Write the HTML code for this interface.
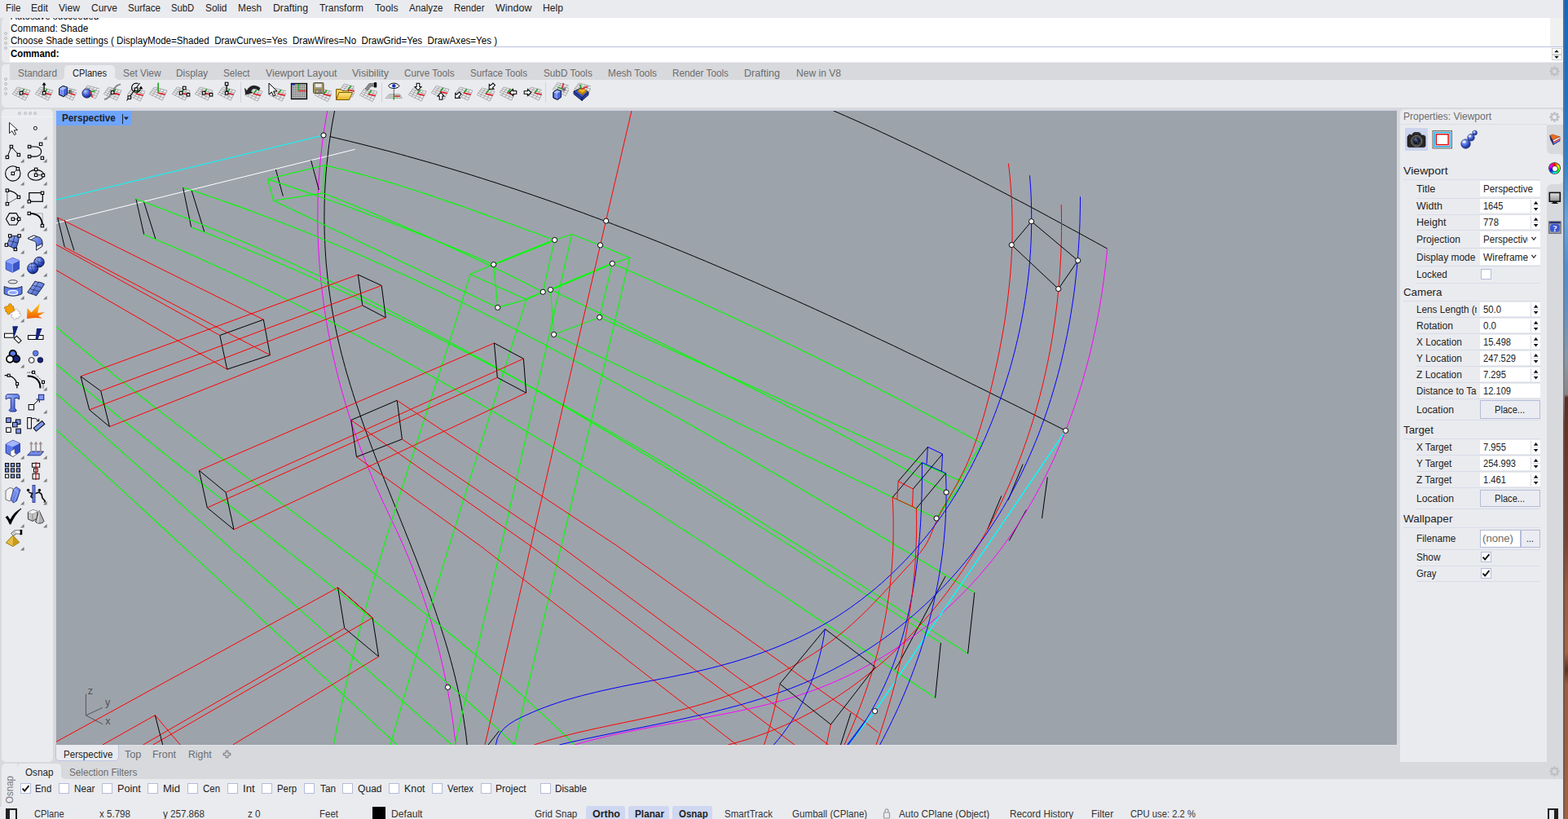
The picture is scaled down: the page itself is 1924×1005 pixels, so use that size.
<!DOCTYPE html>
<html><head><meta charset="utf-8"><title>Rhino</title>
<style>
html,body{margin:0;padding:0;}
body{width:1924px;height:1005px;position:relative;overflow:hidden;background:#EAEBEF;font-family:"Liberation Sans",sans-serif;}
.a{position:absolute;}
.t{position:absolute;white-space:pre;line-height:1;transform-origin:0 0;display:inline-block;}
.cb{position:absolute;width:12px;height:12px;background:#fff;border:1px solid #b9bfd6;box-sizing:content-box;}
.box{position:absolute;background:#fff;}
.sep{position:absolute;height:1px;background:#d3d8e6;}
</style></head><body>
<div class="a" style="left:0px;top:0px;width:1919px;height:1005px;background:#D8D9DD;"></div>
<div class="a" style="left:1918px;top:0px;width:6px;height:1005px;background:linear-gradient(to bottom,#1467bd 0px,#1e74c4 120px,#2f83cc 200px,#6aa6d8 270px,#4d8fcf 330px,#5f93c4 380px,#8a9aa8 440px,#8c8682 484px,#5a2c25 488px,#6b372e 560px,#7a4233 660px,#9a5a3e 720px,#a86645 800px,#5e3324 822px,#9c5c3f 840px,#a3633f 1005px);"></div>
<div class="a" style="left:1918px;top:0px;width:1.5px;height:1005px;background:linear-gradient(to bottom,#3f6ea5 0px,#5b7fae 300px,#7d7f86 480px,#6a4a42 520px,#7a5a4e 1005px);"></div>
<div class="a" style="left:0px;top:0px;width:1918px;height:22px;background:#EAEBEF;"></div>
<div class="a" style="left:2px;top:22px;width:1916px;height:54.5px;background:#EAEBEF;border-radius:5px 0 0 5px;"></div>
<div class="a" style="left:12px;top:22px;width:1890px;height:35px;background:#fff;"></div>
<div class="a" style="left:1902px;top:22px;width:16px;height:35px;background:#F0F0F0;"></div>
<div class="a" style="left:12px;top:57px;width:1906px;height:1px;background:#B9C2DF;"></div>
<div class="a" style="left:12px;top:58px;width:1906px;height:18px;background:#fff;"></div>
<div class="a" style="left:1903.5px;top:59px;width:13px;height:7.7px;background:#fff;border:1px solid #d0d0d0;box-sizing:border-box;"></div>
<div class="a" style="left:1903.5px;top:66.7px;width:13px;height:7.8px;background:#fff;border:1px solid #d0d0d0;box-sizing:border-box;"></div>
<svg class="a" style="left:1903px;top:58px" width="14" height="17"><path d="M4.2 6.3L7 3.2L9.8 6.3Z M4.2 10.8L7 13.9L9.8 10.8Z" fill="#111"/></svg>
<div class="a" style="left:4.9px;top:39.0px;width:2px;height:2px;border:1px solid #b8b9bf;border-radius:50%;"></div>
<div class="a" style="left:4.9px;top:45.0px;width:2px;height:2px;border:1px solid #b8b9bf;border-radius:50%;"></div>
<div class="a" style="left:4.9px;top:51.0px;width:2px;height:2px;border:1px solid #b8b9bf;border-radius:50%;"></div>
<div class="a" style="left:4.9px;top:57.0px;width:2px;height:2px;border:1px solid #b8b9bf;border-radius:50%;"></div>
<div class="a" style="left:2px;top:79px;width:1916px;height:52.7px;background:#EAEBEF;border-radius:5px 0 0 5px;"></div>
<div class="a" style="left:11.5px;top:79px;width:1906.5px;height:18.5px;background:#D8D9DD;"></div>
<div class="a" style="left:79.2px;top:79.5px;width:61.6px;height:18.5px;background:#EAEBEF;border-radius:5px 5px 0 0;"></div>
<svg class="a" style="left:74.2px;top:92.5px" width="5" height="5"><path d="M5 0 A5 5 0 0 1 0 5 L5 5Z" fill="#EAEBEF"/></svg>
<svg class="a" style="left:140px;top:92.5px" width="6" height="5"><path d="M0 0H1 A5 5 0 0 0 6 5 L0 5Z" fill="#EAEBEF"/></svg>
<div class="a" style="left:4.9px;top:95.0px;width:2px;height:2px;border:1px solid #b8b9bf;border-radius:50%;"></div>
<div class="a" style="left:4.9px;top:101.0px;width:2px;height:2px;border:1px solid #b8b9bf;border-radius:50%;"></div>
<div class="a" style="left:4.9px;top:107.0px;width:2px;height:2px;border:1px solid #b8b9bf;border-radius:50%;"></div>
<div class="a" style="left:4.9px;top:113.0px;width:2px;height:2px;border:1px solid #b8b9bf;border-radius:50%;"></div>
<div class="a" style="left:294.7px;top:101px;width:1.2px;height:25px;background:#cfd2de;"></div>
<div class="a" style="left:467.8px;top:101px;width:1.2px;height:25px;background:#cfd2de;"></div>
<div class="a" style="left:668.5px;top:101px;width:1.2px;height:25px;background:#cfd2de;"></div>
<div class="a" style="left:2px;top:134.3px;width:63px;height:800.7px;background:#EAEBEF;border-radius:5px;"></div>
<div class="a" style="left:22.2px;top:136.9px;width:2px;height:2px;border:1px solid #b8b9bf;border-radius:50%;"></div>
<div class="a" style="left:28.5px;top:136.9px;width:2px;height:2px;border:1px solid #b8b9bf;border-radius:50%;"></div>
<div class="a" style="left:34.8px;top:136.9px;width:2px;height:2px;border:1px solid #b8b9bf;border-radius:50%;"></div>
<div class="a" style="left:41.2px;top:136.9px;width:2px;height:2px;border:1px solid #b8b9bf;border-radius:50%;"></div>
<div class="a" style="left:2px;top:143.3px;width:63px;height:0.7px;background:#f2f3f6;"></div>
<div class="a" style="left:69px;top:136px;width:1645px;height:778px;background:#9DA3AB;"></div>
<div class="a" style="left:68.2px;top:135.2px;width:1645.8px;height:0.8px;background:#cdd2e4;"></div>
<div class="a" style="left:68.2px;top:135.2px;width:0.8px;height:778.8px;background:#cdd2e4;"></div>
<div class="a" style="left:69px;top:136px;width:91.5px;height:18px;background:#6EA5FF;border-radius:0 0 3px 0;"></div>
<div class="a" style="left:149.5px;top:139.5px;width:1.2px;height:12px;background:#20242e;"></div>
<svg class="a" style="left:151px;top:142px" width="8" height="6"><path d="M0.8 1.5L7 1.5L3.9 5.3Z" fill="#20242e"/></svg>
<div class="a" style="left:69px;top:914px;width:1645px;height:1px;background:#e0e2ea;"></div>
<div class="a" style="left:68.2px;top:914px;width:78px;height:20.3px;background:#EAEBEF;border-radius:0 0 5px 5px;border:1px solid #bcc5e0;border-top:none;box-sizing:border-box;"></div>
<svg class="a" style="left:273px;top:920px" width="11" height="11"><path d="M4.2 1.2h2.6v3h3v2.6h-3v3h-2.6v-3h-3v-2.6h3z" fill="none" stroke="#666" stroke-width="0.9"/></svg>
<div class="a" style="left:1718px;top:134px;width:200px;height:801px;background:#EAEBEF;border-radius:5px 5px 0 0;"></div>
<div class="a" style="left:1718px;top:152px;width:180px;height:1px;background:#dddfe6;"></div>
<div class="a" style="left:1898px;top:152.5px;width:20px;height:36px;background:#D8D9DD;border-radius:0 0 0 6px;"></div>
<div class="a" style="left:1898px;top:225.5px;width:20px;height:709.5px;background:#D8D9DD;border-radius:6px 0 0 0;"></div>
<svg class="a" style="left:1913px;top:188.5px" width="5" height="37"><path d="M5 0H0A5 5 0 0 1 5 5Z M5 37H0A5 5 0 0 0 5 32Z" fill="#D8D9DD"/></svg>
<div class="a" style="left:1724px;top:157px;width:28px;height:28px;background:#CDD5EE;"></div>
<div class="a" style="left:1722px;top:220px;width:168px;height:1px;background:#d9dce8;"></div>
<div class="a" style="left:1738px;top:243px;width:152px;height:1px;background:#d9dce8;"></div>
<div class="a" style="left:1738px;top:263px;width:152px;height:1px;background:#d9dce8;"></div>
<div class="a" style="left:1738px;top:282px;width:152px;height:1px;background:#d9dce8;"></div>
<div class="a" style="left:1738px;top:304px;width:152px;height:1px;background:#d9dce8;"></div>
<div class="a" style="left:1738px;top:326px;width:152px;height:1px;background:#d9dce8;"></div>
<div class="a" style="left:1738px;top:347px;width:152px;height:1px;background:#d9dce8;"></div>
<div class="a" style="left:1722px;top:369px;width:168px;height:1px;background:#d9dce8;"></div>
<div class="a" style="left:1738px;top:389px;width:152px;height:1px;background:#d9dce8;"></div>
<div class="a" style="left:1738px;top:409px;width:152px;height:1px;background:#d9dce8;"></div>
<div class="a" style="left:1738px;top:429px;width:152px;height:1px;background:#d9dce8;"></div>
<div class="a" style="left:1738px;top:449px;width:152px;height:1px;background:#d9dce8;"></div>
<div class="a" style="left:1738px;top:469px;width:152px;height:1px;background:#d9dce8;"></div>
<div class="a" style="left:1738px;top:489px;width:152px;height:1px;background:#d9dce8;"></div>
<div class="a" style="left:1738px;top:515px;width:152px;height:1px;background:#d9dce8;"></div>
<div class="a" style="left:1722px;top:538px;width:168px;height:1px;background:#d9dce8;"></div>
<div class="a" style="left:1738px;top:558px;width:152px;height:1px;background:#d9dce8;"></div>
<div class="a" style="left:1738px;top:578px;width:152px;height:1px;background:#d9dce8;"></div>
<div class="a" style="left:1738px;top:598px;width:152px;height:1px;background:#d9dce8;"></div>
<div class="a" style="left:1738px;top:624px;width:152px;height:1px;background:#d9dce8;"></div>
<div class="a" style="left:1722px;top:647px;width:168px;height:1px;background:#d9dce8;"></div>
<div class="a" style="left:1738px;top:674px;width:152px;height:1px;background:#d9dce8;"></div>
<div class="a" style="left:1738px;top:694px;width:152px;height:1px;background:#d9dce8;"></div>
<div class="a" style="left:1738px;top:713px;width:152px;height:1px;background:#d9dce8;"></div>
<div class="a" style="left:1816px;top:222px;width:74px;height:19px;background:#fff;"></div>
<div class="a" style="left:1816px;top:244px;width:74px;height:17px;background:#fff;"></div>
<div class="a" style="left:1816px;top:264px;width:74px;height:17px;background:#fff;"></div>
<div class="a" style="left:1816px;top:284px;width:74px;height:19px;background:#fff;"></div>
<div class="a" style="left:1816px;top:306px;width:74px;height:19px;background:#fff;"></div>
<div class="a" style="left:1816px;top:371px;width:74px;height:17px;background:#fff;"></div>
<div class="a" style="left:1816px;top:391px;width:74px;height:17px;background:#fff;"></div>
<div class="a" style="left:1816px;top:411px;width:74px;height:17px;background:#fff;"></div>
<div class="a" style="left:1816px;top:431px;width:74px;height:17px;background:#fff;"></div>
<div class="a" style="left:1816px;top:451px;width:74px;height:17px;background:#fff;"></div>
<div class="a" style="left:1816px;top:471px;width:74px;height:17px;background:#fff;"></div>
<div class="a" style="left:1816px;top:540px;width:74px;height:17px;background:#fff;"></div>
<div class="a" style="left:1816px;top:560px;width:74px;height:17px;background:#fff;"></div>
<div class="a" style="left:1816px;top:580px;width:74px;height:17px;background:#fff;"></div>
<div class="a" style="left:1878.3px;top:244.5px;width:1px;height:16px;background:#d8dbe6;"></div>
<div class="a" style="left:1879.3px;top:252.2px;width:10.7px;height:0.8px;background:#e1e4ee;"></div>
<svg class="a" style="left:1880px;top:244px" width="10" height="17"><path d="M1.8 6.8L4.6 2.9L7.4 6.8Z M1.8 10.9L4.6 14.5L7.4 10.9Z" fill="#111"/></svg>
<div class="a" style="left:1878.3px;top:264.5px;width:1px;height:16px;background:#d8dbe6;"></div>
<div class="a" style="left:1879.3px;top:272.2px;width:10.7px;height:0.8px;background:#e1e4ee;"></div>
<svg class="a" style="left:1880px;top:264px" width="10" height="17"><path d="M1.8 6.8L4.6 2.9L7.4 6.8Z M1.8 10.9L4.6 14.5L7.4 10.9Z" fill="#111"/></svg>
<div class="a" style="left:1878.3px;top:371.5px;width:1px;height:16px;background:#d8dbe6;"></div>
<div class="a" style="left:1879.3px;top:379.2px;width:10.7px;height:0.8px;background:#e1e4ee;"></div>
<svg class="a" style="left:1880px;top:371px" width="10" height="17"><path d="M1.8 6.8L4.6 2.9L7.4 6.8Z M1.8 10.9L4.6 14.5L7.4 10.9Z" fill="#111"/></svg>
<div class="a" style="left:1878.3px;top:391.5px;width:1px;height:16px;background:#d8dbe6;"></div>
<div class="a" style="left:1879.3px;top:399.2px;width:10.7px;height:0.8px;background:#e1e4ee;"></div>
<svg class="a" style="left:1880px;top:391px" width="10" height="17"><path d="M1.8 6.8L4.6 2.9L7.4 6.8Z M1.8 10.9L4.6 14.5L7.4 10.9Z" fill="#111"/></svg>
<div class="a" style="left:1878.3px;top:411.5px;width:1px;height:16px;background:#d8dbe6;"></div>
<div class="a" style="left:1879.3px;top:419.2px;width:10.7px;height:0.8px;background:#e1e4ee;"></div>
<svg class="a" style="left:1880px;top:411px" width="10" height="17"><path d="M1.8 6.8L4.6 2.9L7.4 6.8Z M1.8 10.9L4.6 14.5L7.4 10.9Z" fill="#111"/></svg>
<div class="a" style="left:1878.3px;top:431.5px;width:1px;height:16px;background:#d8dbe6;"></div>
<div class="a" style="left:1879.3px;top:439.2px;width:10.7px;height:0.8px;background:#e1e4ee;"></div>
<svg class="a" style="left:1880px;top:431px" width="10" height="17"><path d="M1.8 6.8L4.6 2.9L7.4 6.8Z M1.8 10.9L4.6 14.5L7.4 10.9Z" fill="#111"/></svg>
<div class="a" style="left:1878.3px;top:451.5px;width:1px;height:16px;background:#d8dbe6;"></div>
<div class="a" style="left:1879.3px;top:459.2px;width:10.7px;height:0.8px;background:#e1e4ee;"></div>
<svg class="a" style="left:1880px;top:451px" width="10" height="17"><path d="M1.8 6.8L4.6 2.9L7.4 6.8Z M1.8 10.9L4.6 14.5L7.4 10.9Z" fill="#111"/></svg>
<div class="a" style="left:1878.3px;top:540.5px;width:1px;height:16px;background:#d8dbe6;"></div>
<div class="a" style="left:1879.3px;top:548.2px;width:10.7px;height:0.8px;background:#e1e4ee;"></div>
<svg class="a" style="left:1880px;top:540px" width="10" height="17"><path d="M1.8 6.8L4.6 2.9L7.4 6.8Z M1.8 10.9L4.6 14.5L7.4 10.9Z" fill="#111"/></svg>
<div class="a" style="left:1878.3px;top:560.5px;width:1px;height:16px;background:#d8dbe6;"></div>
<div class="a" style="left:1879.3px;top:568.2px;width:10.7px;height:0.8px;background:#e1e4ee;"></div>
<svg class="a" style="left:1880px;top:560px" width="10" height="17"><path d="M1.8 6.8L4.6 2.9L7.4 6.8Z M1.8 10.9L4.6 14.5L7.4 10.9Z" fill="#111"/></svg>
<div class="a" style="left:1878.3px;top:580.5px;width:1px;height:16px;background:#d8dbe6;"></div>
<div class="a" style="left:1879.3px;top:588.2px;width:10.7px;height:0.8px;background:#e1e4ee;"></div>
<svg class="a" style="left:1880px;top:580px" width="10" height="17"><path d="M1.8 6.8L4.6 2.9L7.4 6.8Z M1.8 10.9L4.6 14.5L7.4 10.9Z" fill="#111"/></svg>
<svg class="a" style="left:1878px;top:289px" width="10" height="8"><path d="M1.4 1.9L4 5.3L6.6 1.9" fill="none" stroke="#222" stroke-width="1.2"/></svg>
<svg class="a" style="left:1878px;top:311px" width="10" height="8"><path d="M1.4 1.9L4 5.3L6.6 1.9" fill="none" stroke="#222" stroke-width="1.2"/></svg>
<div class="a" style="left:1817.3px;top:330px;width:13px;height:13px;background:#fff;border:1px solid #b4bcd8;box-sizing:border-box;"></div>
<div class="a" style="left:1817.3px;top:677.3px;width:13px;height:13px;background:#fff;border:1px solid #b4bcd8;box-sizing:border-box;"></div>
<svg class="a" style="left:1817.3px;top:677.3px" width="13" height="13"><path d="M2.6 6.6L5.2 9.6L10.4 3.2" fill="none" stroke="#111" stroke-width="1.9"/></svg>
<div class="a" style="left:1817.3px;top:697px;width:13px;height:13px;background:#fff;border:1px solid #b4bcd8;box-sizing:border-box;"></div>
<svg class="a" style="left:1817.3px;top:697px" width="13" height="13"><path d="M2.6 6.6L5.2 9.6L10.4 3.2" fill="none" stroke="#111" stroke-width="1.9"/></svg>
<div class="a" style="left:1816px;top:491px;width:74px;height:23px;background:#EBECF2;border:1px solid #b4bcd8;box-sizing:border-box;"></div>
<div class="a" style="left:1816px;top:601px;width:74px;height:21px;background:#EBECF2;border:1px solid #b4bcd8;box-sizing:border-box;"></div>
<div class="a" style="left:1816px;top:650px;width:49.5px;height:21.5px;background:#fff;border:1px solid #b4bcd8;box-sizing:border-box;"></div>
<div class="a" style="left:1866px;top:650px;width:24px;height:21.5px;background:#EBECF2;border:1px solid #b4bcd8;box-sizing:border-box;"></div>
<div class="a" style="left:2px;top:956px;width:1916px;height:49px;background:#EAEBEF;"></div>
<div class="a" style="left:2px;top:937px;width:19px;height:53px;background:#EAEBEF;border-radius:5px 0 0 5px;"></div>
<div class="a" style="left:21px;top:937px;width:54px;height:20px;background:#EAEBEF;border-radius:5px 5px 0 0;"></div>
<svg class="a" style="left:75px;top:951px" width="5" height="5"><path d="M0 0 A5 5 0 0 0 5 5 L0 5Z" fill="#EAEBEF"/></svg>
<div class="a" style="left:24.5px;top:961px;width:13px;height:13px;background:#fff;border:1px solid #b4bcd8;box-sizing:border-box;"></div>
<svg class="a" style="left:24.5px;top:961px" width="13" height="13"><path d="M2.6 6.6L5.2 9.6L10.4 3.2" fill="none" stroke="#111" stroke-width="1.9"/></svg>
<div class="a" style="left:72px;top:961px;width:13px;height:13px;background:#fff;border:1px solid #b4bcd8;box-sizing:border-box;"></div>
<div class="a" style="left:125px;top:961px;width:13px;height:13px;background:#fff;border:1px solid #b4bcd8;box-sizing:border-box;"></div>
<div class="a" style="left:181.3px;top:961px;width:13px;height:13px;background:#fff;border:1px solid #b4bcd8;box-sizing:border-box;"></div>
<div class="a" style="left:230.4px;top:961px;width:13px;height:13px;background:#fff;border:1px solid #b4bcd8;box-sizing:border-box;"></div>
<div class="a" style="left:279.2px;top:961px;width:13px;height:13px;background:#fff;border:1px solid #b4bcd8;box-sizing:border-box;"></div>
<div class="a" style="left:321.3px;top:961px;width:13px;height:13px;background:#fff;border:1px solid #b4bcd8;box-sizing:border-box;"></div>
<div class="a" style="left:373.3px;top:961px;width:13px;height:13px;background:#fff;border:1px solid #b4bcd8;box-sizing:border-box;"></div>
<div class="a" style="left:420.4px;top:961px;width:13px;height:13px;background:#fff;border:1px solid #b4bcd8;box-sizing:border-box;"></div>
<div class="a" style="left:477.4px;top:961px;width:13px;height:13px;background:#fff;border:1px solid #b4bcd8;box-sizing:border-box;"></div>
<div class="a" style="left:530.4px;top:961px;width:13px;height:13px;background:#fff;border:1px solid #b4bcd8;box-sizing:border-box;"></div>
<div class="a" style="left:590px;top:961px;width:13px;height:13px;background:#fff;border:1px solid #b4bcd8;box-sizing:border-box;"></div>
<div class="a" style="left:662.6px;top:961px;width:13px;height:13px;background:#fff;border:1px solid #b4bcd8;box-sizing:border-box;"></div>
<div class="a" style="left:0px;top:990px;width:1918px;height:15px;background:#EAEBEF;"></div>
<div class="a" style="left:719px;top:989px;width:48px;height:16px;background:#CFD7F1;border-radius:3px 3px 0 0;"></div>
<div class="a" style="left:771px;top:989px;width:50px;height:16px;background:#CFD7F1;border-radius:3px 3px 0 0;"></div>
<div class="a" style="left:824.5px;top:989px;width:49.5px;height:16px;background:#CFD7F1;border-radius:3px 3px 0 0;"></div>
<div class="a" style="left:457px;top:990px;width:15.8px;height:15px;background:#000;"></div>
<div class="a" style="left:7.3px;top:992px;width:13.5px;height:13px;background:none;border:2px solid #222;border-bottom:none;box-sizing:border-box;"></div>
<div class="a" style="left:7.3px;top:992px;width:4.7px;height:13px;background:#222;"></div>
<div class="a" style="left:1899px;top:991.7px;width:13px;height:13.3px;background:none;border:2px solid #222;border-bottom:none;box-sizing:border-box;"></div>
<div class="a" style="left:1907px;top:991.7px;width:5px;height:13.3px;background:#222;"></div>
<svg class="a" style="left:1083px;top:991px" width="10" height="14"><rect x="1.5" y="6" width="7" height="7" rx="1" fill="none" stroke="#999" stroke-width="1.2"/><path d="M3 6V3.8a2 2 0 0 1 4 0V6" fill="none" stroke="#999" stroke-width="1.2"/></svg>
<svg class="a" style="left:1901.3px;top:81.4px" width="13" height="13" viewBox="-6.5 -6.5 13 13"><g fill="#bfc0c6"><rect x="-1.3" y="-6.2" width="2.6" height="3.2" transform="rotate(0)"/><rect x="-1.3" y="-6.2" width="2.6" height="3.2" transform="rotate(45)"/><rect x="-1.3" y="-6.2" width="2.6" height="3.2" transform="rotate(90)"/><rect x="-1.3" y="-6.2" width="2.6" height="3.2" transform="rotate(135)"/><rect x="-1.3" y="-6.2" width="2.6" height="3.2" transform="rotate(180)"/><rect x="-1.3" y="-6.2" width="2.6" height="3.2" transform="rotate(225)"/><rect x="-1.3" y="-6.2" width="2.6" height="3.2" transform="rotate(270)"/><rect x="-1.3" y="-6.2" width="2.6" height="3.2" transform="rotate(315)"/></g><circle r="3.6" fill="none" stroke="#bfc0c6" stroke-width="2"/></svg>
<svg class="a" style="left:1901.3px;top:136.5px" width="13" height="13" viewBox="-6.5 -6.5 13 13"><g fill="#bfc0c6"><rect x="-1.3" y="-6.2" width="2.6" height="3.2" transform="rotate(0)"/><rect x="-1.3" y="-6.2" width="2.6" height="3.2" transform="rotate(45)"/><rect x="-1.3" y="-6.2" width="2.6" height="3.2" transform="rotate(90)"/><rect x="-1.3" y="-6.2" width="2.6" height="3.2" transform="rotate(135)"/><rect x="-1.3" y="-6.2" width="2.6" height="3.2" transform="rotate(180)"/><rect x="-1.3" y="-6.2" width="2.6" height="3.2" transform="rotate(225)"/><rect x="-1.3" y="-6.2" width="2.6" height="3.2" transform="rotate(270)"/><rect x="-1.3" y="-6.2" width="2.6" height="3.2" transform="rotate(315)"/></g><circle r="3.6" fill="none" stroke="#bfc0c6" stroke-width="2"/></svg>
<svg class="a" style="left:1901.3px;top:939.5px" width="13" height="13" viewBox="-6.5 -6.5 13 13"><g fill="#bfc0c6"><rect x="-1.3" y="-6.2" width="2.6" height="3.2" transform="rotate(0)"/><rect x="-1.3" y="-6.2" width="2.6" height="3.2" transform="rotate(45)"/><rect x="-1.3" y="-6.2" width="2.6" height="3.2" transform="rotate(90)"/><rect x="-1.3" y="-6.2" width="2.6" height="3.2" transform="rotate(135)"/><rect x="-1.3" y="-6.2" width="2.6" height="3.2" transform="rotate(180)"/><rect x="-1.3" y="-6.2" width="2.6" height="3.2" transform="rotate(225)"/><rect x="-1.3" y="-6.2" width="2.6" height="3.2" transform="rotate(270)"/><rect x="-1.3" y="-6.2" width="2.6" height="3.2" transform="rotate(315)"/></g><circle r="3.6" fill="none" stroke="#bfc0c6" stroke-width="2"/></svg>
<span class="t" style="left:5.5px;top:986px;font-size:12px;color:#7a7a7a;transform:rotate(-90deg) scaleX(0.96);transform-origin:0 0;">Osnap</span>
<svg class="a" style="left:69px;top:136px" width="1645" height="778" viewBox="0 0 1645 778" fill="none" stroke-linecap="butt">
<path d="M0.0 109.3 L328.0 30.0" stroke="#00ffff" stroke-width="1"/>
<path d="M0.0 137.8 L366.5 47.3" stroke="#ffffff" stroke-width="1"/>
<path d="M332.7 -0.0 L331.3 8.0 L329.9 16.1 L328.6 24.1 L327.5 32.2 L326.4 40.2 L325.5 48.3 L324.6 56.4 L323.8 64.5 L323.1 72.6 L322.5 80.7 L322.0 88.8 L321.6 96.9 L321.2 105.1 L321.0 113.2 L320.9 121.3 L320.8 129.4 L320.8 137.6 L320.9 145.7 L321.2 153.8 L321.4 161.9 L321.8 170.0 L322.3 178.1 L322.8 186.3 L323.5 194.4 L324.2 202.5 L325.0 210.5 L325.9 218.6 L326.9 226.7 L327.9 234.8 L329.1 242.8 L330.3 250.9 L331.6 258.9 L333.0 266.9 L334.5 274.9 L336.0 282.9 L337.6 290.9 L339.3 298.9 L341.1 306.8 L343.0 314.8 L344.9 322.7 L346.9 330.6 L349.0 338.4 L351.2 346.3 L353.4 354.1 L355.7 362.0 L358.1 369.7 L360.6 377.5 L363.1 385.2 L365.8 393.0 L368.4 400.6 L371.2 408.3 L374.0 415.9 L376.9 423.5 L379.9 431.1 L383.0 438.6 L386.1 446.1 L389.2 453.6 L392.5 461.0 L395.8 468.4 L399.1 475.8 L402.5 483.1 L406.0 490.4 L409.4 497.7 L412.9 505.0 L416.4 512.3 L419.8 519.6 L423.1 527.0 L426.4 534.4 L429.6 541.8 L432.7 549.3 L435.7 556.8 L438.7 564.4 L441.6 572.0 L444.4 579.6 L447.2 587.3 L449.9 595.0 L452.4 602.7 L455.0 610.4 L457.4 618.2 L459.8 626.0 L462.1 633.8 L464.3 641.7 L466.4 649.6 L468.5 657.5 L470.5 665.4 L472.4 673.3 L474.2 681.2 L476.0 689.2 L477.6 697.2 L479.2 705.2 L480.8 713.2 L482.2 721.2 L483.6 729.2 L484.8 737.2 L486.1 745.2 L487.2 753.3 L488.2 761.3 L489.2 769.4 L490.1 777.4" stroke="#ff00ff" stroke-width="1" stroke-linejoin="round"/>
<path d="M341.6 -0.0 L340.1 8.0 L338.6 16.1 L337.3 24.1 L336.1 32.2 L334.9 40.3 L333.9 48.4 L333.0 56.5 L332.1 64.6 L331.4 72.8 L330.7 80.9 L330.2 89.0 L329.7 97.2 L329.4 105.3 L329.1 113.5 L329.0 121.7 L328.9 129.8 L329.0 138.0 L329.1 146.1 L329.3 154.3 L329.7 162.4 L330.1 170.5 L330.6 178.7 L331.2 186.8 L332.0 194.9 L332.8 203.0 L333.7 211.1 L334.7 219.1 L335.8 227.2 L337.1 235.2 L338.4 243.2 L339.8 251.2 L341.3 259.2 L342.9 267.1 L344.6 275.1 L346.4 283.0 L348.3 290.8 L350.2 298.7 L352.3 306.5 L354.4 314.4 L356.6 322.2 L358.9 329.9 L361.2 337.7 L363.7 345.5 L366.1 353.2 L368.7 360.9 L371.3 368.6 L373.9 376.3 L376.6 384.0 L379.4 391.7 L382.2 399.3 L385.0 407.0 L387.9 414.6 L390.8 422.2 L393.7 429.9 L396.7 437.5 L399.7 445.1 L402.7 452.7 L405.7 460.3 L408.8 467.9 L411.8 475.5 L414.9 483.1 L417.9 490.7 L421.0 498.3 L424.0 505.8 L427.1 513.4 L430.1 521.0 L433.2 528.6 L436.2 536.2 L439.2 543.8 L442.2 551.4 L445.1 559.1 L448.1 566.7 L450.9 574.3 L453.8 582.0 L456.6 589.6 L459.4 597.3 L462.1 604.9 L464.8 612.6 L467.4 620.3 L470.0 628.0 L472.5 635.7 L475.0 643.5 L477.4 651.2 L479.7 659.0 L482.0 666.8 L484.2 674.6 L486.3 682.4 L488.3 690.2 L490.2 698.1 L492.1 706.0 L493.8 713.9 L495.5 721.8 L497.0 729.8 L498.5 737.7 L499.9 745.7 L501.1 753.8 L502.3 761.8 L503.3 769.9 L504.2 778.0" stroke="#000000" stroke-width="1" stroke-linejoin="round"/>
<path d="M335.7 31.6 L343.6 33.4 L351.5 35.3 L359.5 37.2 L367.4 39.2 L375.3 41.1 L383.1 43.1 L391.0 45.1 L398.9 47.2 L406.7 49.2 L414.6 51.3 L422.4 53.4 L430.3 55.6 L438.1 57.8 L445.9 60.0 L453.7 62.2 L461.5 64.4 L469.3 66.7 L477.1 69.0 L484.9 71.3 L492.7 73.7 L500.4 76.0 L508.2 78.4 L515.9 80.9 L523.7 83.3 L531.4 85.8 L539.1 88.2 L546.8 90.8 L554.5 93.3 L562.2 95.8 L569.9 98.4 L577.6 101.0 L585.3 103.6 L593.0 106.3 L600.6 108.9 L608.3 111.6 L616.0 114.3 L623.6 117.1 L631.2 119.8 L638.9 122.6 L646.5 125.3 L654.1 128.2 L661.7 131.0 L669.3 133.8 L676.9 136.7 L684.5 139.6 L692.1 142.5 L699.7 145.4 L707.2 148.3 L714.8 151.3 L722.4 154.2 L729.9 157.2 L737.5 160.2 L745.0 163.2 L752.5 166.3 L760.0 169.3 L767.6 172.4 L775.1 175.5 L782.6 178.6 L790.1 181.7 L797.6 184.8 L805.1 188.0 L812.6 191.2 L820.0 194.3 L827.5 197.5 L835.0 200.7 L842.5 204.0 L849.9 207.2 L857.4 210.4 L864.8 213.7 L872.2 217.0 L879.7 220.3 L887.1 223.6 L894.5 226.9 L902.0 230.2 L909.4 233.5 L916.8 236.9 L924.2 240.2 L931.6 243.6 L939.0 247.0 L946.4 250.4 L953.8 253.8 L961.1 257.2 L968.5 260.6 L975.9 264.0 L983.3 267.5 L990.6 270.9 L998.0 274.4 L1005.3 277.9 L1012.7 281.4 L1020.0 284.8 L1027.4 288.3 L1034.7 291.8 L1042.0 295.4 L1049.4 298.9 L1056.7 302.4 L1064.0 305.9 L1071.3 309.5 L1078.6 313.0 L1085.9 316.6 L1093.2 320.2 L1100.5 323.7 L1107.8 327.3 L1115.1 330.9 L1122.4 334.5 L1129.7 338.1 L1137.0 341.7 L1144.3 345.3 L1151.5 348.9 L1158.8 352.5 L1166.1 356.1 L1173.4 359.7 L1180.6 363.3 L1187.9 366.9 L1195.1 370.6 L1202.4 374.2 L1209.6 377.8 L1216.9 381.5 L1224.1 385.1 L1231.4 388.8 L1238.6 392.4" stroke="#000000" stroke-width="1" stroke-linejoin="round"/>
<path d="M953.6 -0.1 L961.1 3.1 L968.6 6.4 L976.1 9.7 L983.6 13.0 L991.1 16.4 L998.5 19.8 L1006.0 23.1 L1013.4 26.6 L1020.8 30.0 L1028.2 33.5 L1035.6 37.0 L1043.0 40.5 L1050.4 44.0 L1057.8 47.5 L1065.1 51.1 L1072.5 54.7 L1079.8 58.3 L1087.1 61.9 L1094.5 65.6 L1101.8 69.3 L1109.1 72.9 L1116.4 76.6 L1123.7 80.3 L1131.0 84.1 L1138.2 87.8 L1145.5 91.6 L1152.8 95.4 L1160.0 99.1 L1167.3 102.9 L1174.5 106.8 L1181.7 110.6 L1189.0 114.4 L1196.2 118.3 L1203.4 122.1 L1210.6 126.0 L1217.8 129.9 L1225.0 133.8 L1232.2 137.7 L1239.4 141.6 L1246.6 145.5 L1253.8 149.4 L1260.9 153.3 L1268.1 157.3 L1275.3 161.2 L1282.4 165.1 L1289.6 169.1" stroke="#000000" stroke-width="1" stroke-linejoin="round"/>
<path d="M1.7 131.0 L10.3 167.3" stroke="#000000" stroke-width="1"/>
<path d="M10.3 134.2 L21.9 171.3" stroke="#000000" stroke-width="1"/>
<path d="M97.9 108.2 L107.7 151.8" stroke="#000000" stroke-width="1"/>
<path d="M107.5 111.6 L121.8 157.0" stroke="#000000" stroke-width="1"/>
<path d="M155.5 94.0 L165.6 142.7" stroke="#000000" stroke-width="1"/>
<path d="M166.1 97.6 L181.8 148.7" stroke="#000000" stroke-width="1"/>
<path d="M269.4 72.0 L278.3 104.6" stroke="#000000" stroke-width="1"/>
<path d="M312.6 60.8 L322.3 97.0" stroke="#000000" stroke-width="1"/>
<path d="M259.5 83.8 L329.2 66.8 L327.5 100.9 L266.6 110.2 L259.5 83.8" stroke="#00ff00" stroke-width="1.12"/>
<path d="M259.5 83.8 L267.3 86.4 L275.1 89.0 L283.0 91.6 L290.8 94.2 L298.6 96.9 L306.3 99.6 L314.1 102.3 L321.9 105.0 L329.7 107.7 L337.4 110.5 L345.2 113.2 L352.9 116.0 L360.7 118.8 L368.4 121.6 L376.1 124.5 L383.8 127.4 L391.6 130.2 L399.3 133.1 L407.0 136.1 L414.6 139.0 L422.3 142.0 L430.0 144.9 L437.7 147.9 L445.3 150.9 L453.0 154.0 L460.6 157.0 L468.3 160.1 L475.9 163.2 L483.5 166.3 L491.1 169.4 L498.8 172.6 L506.4 175.7 L514.0 178.9 L521.5 182.1 L529.1 185.4 L536.7 188.6" stroke="#00ff00" stroke-width="1.12" stroke-linejoin="round"/>
<path d="M327.5 100.9 L335.4 104.0 L343.2 107.1 L351.1 110.3 L358.9 113.4 L366.7 116.6 L374.6 119.8 L382.4 123.0 L390.2 126.3 L398.0 129.6 L405.7 132.9 L413.5 136.2 L421.3 139.5 L429.0 142.9 L436.8 146.2 L444.5 149.6 L452.2 153.1 L459.9 156.5 L467.7 160.0 L475.3 163.5 L483.0 167.0 L490.7 170.5 L498.4 174.1 L506.0 177.6 L513.7 181.2 L521.3 184.8 L529.0 188.5 L536.6 192.1 L544.2 195.8 L551.8 199.5 L559.4 203.3 L567.0 207.0 L574.5 210.8 L582.1 214.6 L589.7 218.4 L597.2 222.2" stroke="#00ff00" stroke-width="1.12" stroke-linejoin="round"/>
<path d="M266.6 110.2 L541.7 241.4" stroke="#00ff00" stroke-width="1.12"/>
<path d="M329.2 66.8 L337.3 68.6 L345.3 70.5 L353.3 72.5 L361.3 74.5 L369.3 76.6 L377.3 78.8 L385.2 81.0 L393.2 83.2 L401.1 85.5 L409.0 87.9 L416.9 90.3 L424.8 92.7 L432.6 95.2 L440.5 97.7 L448.3 100.3 L456.2 102.9 L464.0 105.5 L471.8 108.2 L479.6 110.9 L487.4 113.6 L495.2 116.3 L503.0 119.0 L510.8 121.8 L518.5 124.6 L526.3 127.4 L534.1 130.2 L541.8 133.0 L549.6 135.9 L557.3 138.7 L565.1 141.5 L572.8 144.4 L580.6 147.2 L588.3 150.0 L596.1 152.9 L603.8 155.7 L611.6 158.5" stroke="#00ff00" stroke-width="1.12" stroke-linejoin="round"/>
<path d="M611.6 158.5 L536.7 188.6" stroke="#00ff00" stroke-width="2.0160000000000005"/>
<path d="M682.3 187.4 L606.5 219.5" stroke="#00ff00" stroke-width="2.0160000000000005"/>
<path d="M611.6 158.5 L632.7 151.5 L667.6 164.9 L703.6 180.3 L682.3 187.4" stroke="#00ff00" stroke-width="1.12"/>
<path d="M606.5 219.5 L597.2 222.2 L576.9 231.5 L541.7 241.4" stroke="#00ff00" stroke-width="1.12"/>
<path d="M597.2 222.2 L577.5 230.3" stroke="#00ff00" stroke-width="1.12"/>
<path d="M536.7 188.6 L507.9 200.6 L576.9 231.5" stroke="#00ff00" stroke-width="1.12"/>
<path d="M536.7 188.6 L541.7 241.4" stroke="#00ff00" stroke-width="1.12"/>
<path d="M611.6 158.5 L597.2 222.2" stroke="#00ff00" stroke-width="1.12"/>
<path d="M606.5 219.5 L610.6 274.5 L666.7 253.4 L682.3 187.4" stroke="#00ff00" stroke-width="1.12"/>
<path d="M507.9 200.6 L505.6 208.4 L503.3 216.2 L500.9 224.0 L498.6 231.7 L496.2 239.5 L493.8 247.3 L491.4 255.1 L489.0 262.8 L486.6 270.6 L484.1 278.3 L481.7 286.1 L479.2 293.8 L476.7 301.6 L474.2 309.3 L471.7 317.0 L469.3 324.8 L466.7 332.5 L464.2 340.2 L461.7 348.0 L459.2 355.7 L456.7 363.4 L454.2 371.2 L451.6 378.9 L449.1 386.6 L446.6 394.4 L444.1 402.1 L441.5 409.8 L439.0 417.5 L436.5 425.3 L434.0 433.0 L431.5 440.7 L429.0 448.5 L426.5 456.2 L424.0 463.9 L421.5 471.7 L419.1 479.4 L416.6 487.2 L414.2 494.9 L411.7 502.7 L409.3 510.4 L406.9 518.2 L404.5 526.0 L402.1 533.7 L399.8 541.5 L397.4 549.3 L395.1 557.1 L392.8 564.8 L390.5 572.6 L388.2 580.4 L386.0 588.2 L383.7 596.1 L381.5 603.9 L379.4 611.7 L377.2 619.5 L375.1 627.4 L372.9 635.2 L370.9 643.1 L368.8 650.9 L366.8 658.8 L364.8 666.7 L362.8 674.6 L360.9 682.5 L359.0 690.4 L357.1 698.3 L355.3 706.2 L353.4 714.1 L351.7 722.1 L349.9 730.0 L348.2 738.0 L346.6 746.0 L344.9 754.0 L343.4 762.0 L341.8 770.0 L340.3 778.0" stroke="#00ff00" stroke-width="1.12" stroke-linejoin="round"/>
<path d="M576.9 231.5 L574.5 239.3 L572.0 247.1 L569.6 254.9 L567.1 262.6 L564.7 270.4 L562.2 278.2 L559.8 286.0 L557.3 293.8 L554.9 301.6 L552.4 309.3 L549.9 317.1 L547.5 324.9 L545.0 332.7 L542.6 340.5 L540.1 348.3 L537.7 356.0 L535.2 363.8 L532.8 371.6 L530.3 379.4 L527.9 387.2 L525.4 395.0 L523.0 402.8 L520.5 410.6 L518.1 418.3 L515.7 426.1 L513.2 433.9 L510.8 441.7 L508.3 449.5 L505.9 457.3 L503.5 465.1 L501.1 472.9 L498.6 480.7 L496.2 488.5 L493.8 496.3 L491.4 504.1 L489.0 511.9 L486.6 519.7 L484.2 527.5 L481.8 535.3 L479.4 543.1 L477.0 550.9 L474.6 558.7 L472.2 566.5 L469.8 574.3 L467.5 582.1 L465.1 590.0 L462.7 597.8 L460.4 605.6 L458.0 613.4 L455.7 621.2 L453.3 629.0 L451.0 636.9 L448.7 644.7 L446.3 652.5 L444.0 660.3 L441.7 668.2 L439.4 676.0 L437.1 683.8 L434.8 691.7 L432.5 699.5 L430.3 707.3 L428.0 715.2 L425.7 723.0 L423.5 730.9 L421.2 738.7 L419.0 746.6 L416.7 754.4 L414.5 762.3 L412.3 770.1 L410.1 778.0" stroke="#00ff00" stroke-width="1.12" stroke-linejoin="round"/>
<path d="M632.7 151.5 L630.9 159.4 L629.1 167.4 L627.3 175.3 L625.5 183.2 L623.7 191.2 L622.0 199.1 L620.2 207.1 L618.4 215.0 L616.6 222.9 L614.8 230.9 L613.0 238.8 L611.2 246.7 L609.4 254.7 L607.6 262.6 L605.8 270.6 L604.1 278.5 L602.3 286.4 L600.5 294.4 L598.7 302.3 L596.9 310.2 L595.1 318.2 L593.3 326.1 L591.5 334.0 L589.7 342.0 L587.9 349.9 L586.1 357.9 L584.3 365.8 L582.5 373.7 L580.7 381.7 L578.9 389.6 L577.1 397.5 L575.3 405.5 L573.5 413.4 L571.7 421.3 L569.9 429.3 L568.1 437.2 L566.3 445.1 L564.5 453.1 L562.7 461.0 L560.9 468.9 L559.0 476.9 L557.2 484.8 L555.4 492.7 L553.6 500.7 L551.8 508.6 L550.0 516.5 L548.1 524.4 L546.3 532.4 L544.5 540.3 L542.7 548.2 L540.9 556.2 L539.0 564.1 L537.2 572.0 L535.4 579.9 L533.5 587.9 L531.7 595.8 L529.9 603.7 L528.0 611.7 L526.2 619.6 L524.4 627.5 L522.5 635.4 L520.7 643.4 L518.8 651.3 L517.0 659.2 L515.1 667.1 L513.3 675.1 L511.4 683.0 L509.6 690.9 L507.7 698.8 L505.8 706.7 L504.0 714.7 L502.1 722.6 L500.3 730.5 L498.4 738.4 L496.5 746.3 L494.6 754.3 L492.8 762.2 L490.9 770.1 L489.0 778.0" stroke="#00ff00" stroke-width="1.12" stroke-linejoin="round"/>
<path d="M703.6 180.3 L701.8 188.3 L699.9 196.3 L698.1 204.2 L696.2 212.2 L694.4 220.2 L692.5 228.2 L690.6 236.1 L688.8 244.1 L686.9 252.1 L685.0 260.0 L683.2 268.0 L681.3 276.0 L679.4 284.0 L677.5 291.9 L675.6 299.9 L673.7 307.9 L671.9 315.8 L670.0 323.8 L668.1 331.8 L666.2 339.7 L664.3 347.7 L662.4 355.7 L660.5 363.6 L658.6 371.6 L656.7 379.6 L654.8 387.5 L652.9 395.5 L651.0 403.5 L649.1 411.4 L647.2 419.4 L645.3 427.4 L643.3 435.3 L641.4 443.3 L639.5 451.3 L637.6 459.2 L635.7 467.2 L633.8 475.1 L631.9 483.1 L630.0 491.1 L628.1 499.0 L626.2 507.0 L624.3 515.0 L622.4 522.9 L620.5 530.9 L618.5 538.9 L616.6 546.8 L614.7 554.8 L612.8 562.8 L610.9 570.7 L609.0 578.7 L607.1 586.7 L605.2 594.6 L603.3 602.6 L601.4 610.6 L599.5 618.5 L597.7 626.5 L595.8 634.5 L593.9 642.4 L592.0 650.4 L590.1 658.4 L588.2 666.3 L586.4 674.3 L584.5 682.3 L582.6 690.3 L580.7 698.2 L578.9 706.2 L577.0 714.2 L575.1 722.2 L573.3 730.1 L571.4 738.1 L569.6 746.1 L567.7 754.1 L565.9 762.0 L564.0 770.0 L562.2 778.0" stroke="#00ff00" stroke-width="1.12" stroke-linejoin="round"/>
<path d="M682.3 187.4 L689.8 190.6 L697.3 193.8 L704.7 197.0 L712.2 200.3 L719.6 203.5 L727.1 206.8 L734.5 210.1 L742.0 213.4 L749.4 216.7 L756.9 220.0 L764.3 223.3 L771.7 226.6 L779.1 230.0 L786.5 233.3 L793.9 236.7 L801.3 240.1 L808.7 243.5 L816.1 246.9 L823.5 250.3 L830.9 253.8 L838.2 257.2 L845.6 260.7 L853.0 264.1 L860.3 267.6 L867.7 271.1 L875.0 274.6 L882.3 278.1 L889.7 281.7 L897.0 285.2 L904.3 288.8 L911.6 292.3 L918.9 295.9 L926.3 299.5 L933.6 303.1 L940.8 306.7 L948.1 310.3 L955.4 313.9 L962.7 317.6 L970.0 321.2 L977.2 324.9 L984.5 328.6 L991.7 332.2 L999.0 335.9 L1006.2 339.6 L1013.5 343.4 L1020.7 347.1 L1027.9 350.8 L1035.2 354.6 L1042.4 358.3 L1049.6 362.1 L1056.8 365.9 L1064.0 369.7 L1071.2 373.5 L1078.4 377.3 L1085.6 381.1 L1092.7 384.9 L1099.9 388.8 L1107.1 392.6 L1114.2 396.5 L1121.4 400.3 L1128.6 404.2 L1135.7 408.1" stroke="#00ff00" stroke-width="1.12" stroke-linejoin="round"/>
<path d="M606.5 219.5 L613.9 223.0 L621.2 226.5 L628.6 230.0 L635.9 233.5 L643.2 237.0 L650.6 240.6 L657.9 244.1 L665.3 247.6 L672.6 251.1 L680.0 254.7 L687.3 258.2 L694.6 261.7 L702.0 265.3 L709.3 268.8 L716.6 272.4 L723.9 275.9 L731.3 279.5 L738.6 283.1 L745.9 286.7 L753.2 290.2 L760.5 293.8 L767.8 297.4 L775.1 301.0 L782.4 304.6 L789.7 308.3 L797.0 311.9 L804.3 315.5 L811.6 319.1 L818.9 322.8 L826.2 326.4 L833.5 330.1 L840.7 333.7 L848.0 337.4 L855.3 341.1 L862.5 344.8 L869.8 348.5 L877.0 352.2 L884.3 355.9 L891.5 359.6 L898.8 363.4 L906.0 367.1 L913.2 370.9 L920.5 374.6 L927.7 378.4 L934.9 382.2 L942.1 386.0 L949.3 389.8 L956.5 393.6 L963.7 397.4 L970.9 401.2 L978.1 405.1 L985.2 408.9 L992.4 412.8 L999.6 416.6 L1006.7 420.5 L1013.9 424.4 L1021.0 428.3 L1028.2 432.3 L1035.3 436.2 L1042.4 440.1 L1049.5 444.1 L1056.6 448.1 L1063.7 452.0 L1070.8 456.0 L1077.9 460.0 L1085.0 464.1 L1092.1 468.1" stroke="#00ff00" stroke-width="1.12" stroke-linejoin="round"/>
<path d="M666.7 253.4 L1112.7 455.7" stroke="#00ff00" stroke-width="1.12"/>
<path d="M610.6 274.5 L1080.1 500.1" stroke="#00ff00" stroke-width="1.12"/>
<path d="M1135.7 408.1 L1080.1 500.1" stroke="#00ff00" stroke-width="1.12"/>
<path d="M1105.0 451.3 L1112.7 455.7 L1082.0 497.2" stroke="#00ff00" stroke-width="1.12"/>
<path d="M155.5 94.0 L163.2 96.5 L170.9 99.0 L178.7 101.6 L186.3 104.2 L194.0 106.8 L201.7 109.5 L209.3 112.2 L217.0 114.9 L224.6 117.6 L232.2 120.4 L239.8 123.2 L247.4 126.0 L255.0 128.9 L262.6 131.7 L270.2 134.7 L277.7 137.6 L285.2 140.5 L292.8 143.5 L300.3 146.5 L307.8 149.5 L315.3 152.6 L322.8 155.7 L330.2 158.8 L337.7 161.9 L345.2 165.1 L352.6 168.2 L360.0 171.4 L367.5 174.6 L374.9 177.9 L382.3 181.1 L389.7 184.4 L397.1 187.7 L404.4 191.0 L411.8 194.4 L419.2 197.8 L426.5 201.1 L433.9 204.5 L441.2 208.0 L448.5 211.4 L455.8 214.9 L463.1 218.3 L470.4 221.8 L477.7 225.4 L485.0 228.9 L492.3 232.4 L499.5 236.0 L506.8 239.6 L514.1 243.2 L521.3 246.8 L528.5 250.4 L535.8 254.1 L543.0 257.8 L550.2 261.4 L557.4 265.1 L564.6 268.8 L571.8 272.6 L579.0 276.3 L586.2 280.0 L593.3 283.8 L600.5 287.6 L607.7 291.4 L614.8 295.2 L622.0 299.0 L629.1 302.8 L636.3 306.6 L643.4 310.5 L650.5 314.3 L657.7 318.2 L664.8 322.1 L671.9 326.0 L679.0 329.9 L686.1 333.8 L693.2 337.7 L700.3 341.6 L707.4 345.5 L714.5 349.5 L721.5 353.4 L728.6 357.4 L735.7 361.3 L742.8 365.3 L749.8 369.3 L756.9 373.3 L764.0 377.2 L771.0 381.2 L778.1 385.2 L785.1 389.3 L792.1 393.3 L799.2 397.3 L806.2 401.3 L813.2 405.4 L820.3 409.4 L827.3 413.5 L834.3 417.5 L841.3 421.6 L848.3 425.6 L855.4 429.7 L862.4 433.8 L869.4 437.9 L876.4 441.9 L883.4 446.0 L890.4 450.1 L897.4 454.2 L904.3 458.3 L911.3 462.4 L918.3 466.5 L925.3 470.7 L932.3 474.8 L939.3 478.9 L946.2 483.0 L953.2 487.2 L960.2 491.3 L967.1 495.4 L974.1 499.6 L981.1 503.7 L988.0 507.8 L995.0 512.0 L1001.9 516.1 L1008.9 520.3 L1015.8 524.5 L1022.8 528.6 L1029.7 532.8 L1036.7 536.9 L1043.6 541.1 L1050.5 545.2 L1057.5 549.4 L1064.4 553.6 L1071.4 557.7 L1078.3 561.9 L1085.2 566.1 L1092.2 570.2 L1099.1 574.4 L1106.0 578.6 L1112.9 582.8 L1119.9 586.9 L1126.8 591.1" stroke="#00ff00" stroke-width="1.12" stroke-linejoin="round"/>
<path d="M165.6 142.8 L173.1 145.7 L180.7 148.6 L188.2 151.6 L195.7 154.6 L203.2 157.6 L210.7 160.6 L218.2 163.6 L225.7 166.7 L233.1 169.8 L240.6 172.9 L248.1 176.0 L255.5 179.1 L262.9 182.3 L270.3 185.5 L277.7 188.7 L285.1 191.9 L292.5 195.1 L299.9 198.4 L307.3 201.7 L314.7 205.0 L322.0 208.3 L329.4 211.6 L336.7 214.9 L344.0 218.3 L351.3 221.7 L358.7 225.1 L366.0 228.5 L373.3 231.9 L380.5 235.4 L387.8 238.9 L395.1 242.4 L402.3 245.9 L409.6 249.4 L416.8 252.9 L424.1 256.5 L431.3 260.0 L438.5 263.6 L445.8 267.2 L453.0 270.8 L460.2 274.4 L467.3 278.1 L474.5 281.8 L481.7 285.4 L488.9 289.1 L496.0 292.8 L503.2 296.5 L510.3 300.3 L517.5 304.0 L524.6 307.8 L531.7 311.6 L538.9 315.3 L546.0 319.1 L553.1 323.0 L560.2 326.8 L567.3 330.6 L574.3 334.5 L581.4 338.3 L588.5 342.2 L595.6 346.1 L602.6 350.0 L609.7 353.9 L616.7 357.9 L623.8 361.8 L630.8 365.8 L637.8 369.7 L644.8 373.7 L651.9 377.7 L658.9 381.7 L665.9 385.7 L672.9 389.7 L679.9 393.7 L686.9 397.8 L693.8 401.8 L700.8 405.9 L707.8 409.9 L714.8 414.0 L721.7 418.1 L728.7 422.2 L735.6 426.3 L742.6 430.4 L749.5 434.5 L756.4 438.7 L763.4 442.8 L770.3 447.0 L777.2 451.1 L784.1 455.3 L791.0 459.5 L797.9 463.6 L804.9 467.8 L811.7 472.0 L818.6 476.2 L825.5 480.4 L832.4 484.7 L839.3 488.9 L846.2 493.1 L853.0 497.4 L859.9 501.6 L866.8 505.8 L873.6 510.1 L880.5 514.4 L887.3 518.6 L894.2 522.9 L901.0 527.2 L907.9 531.5 L914.7 535.8 L921.6 540.1 L928.4 544.4 L935.2 548.7 L942.0 553.0 L948.9 557.3 L955.7 561.6 L962.5 565.9 L969.3 570.3 L976.1 574.6 L982.9 578.9 L989.7 583.3 L996.5 587.6 L1003.3 591.9 L1010.1 596.3 L1016.9 600.6 L1023.7 605.0 L1030.5 609.3 L1037.3 613.7 L1044.1 618.1 L1050.9 622.4 L1057.7 626.8 L1064.4 631.1 L1071.2 635.5 L1078.0 639.9 L1084.8 644.2 L1091.5 648.6 L1098.3 653.0 L1105.1 657.4 L1111.8 661.7 L1118.6 666.1" stroke="#00ff00" stroke-width="1.12" stroke-linejoin="round"/>
<path d="M97.9 108.2 L105.5 111.0 L113.1 113.8 L120.7 116.7 L128.3 119.6 L135.8 122.5 L143.4 125.4 L150.9 128.3 L158.4 131.3 L165.9 134.3 L173.4 137.3 L180.9 140.3 L188.4 143.4 L195.9 146.5 L203.4 149.6 L210.8 152.7 L218.2 155.9 L225.7 159.0 L233.1 162.2 L240.5 165.4 L247.9 168.7 L255.3 171.9 L262.7 175.2 L270.0 178.5 L277.4 181.8 L284.7 185.1 L292.1 188.5 L299.4 191.9 L306.7 195.3 L314.0 198.7 L321.3 202.1 L328.6 205.6 L335.9 209.0 L343.2 212.5 L350.4 216.0 L357.7 219.5 L364.9 223.1 L372.1 226.6 L379.4 230.2 L386.6 233.8 L393.8 237.4 L401.0 241.1 L408.2 244.7 L415.4 248.4 L422.6 252.1 L429.7 255.7 L436.9 259.5 L444.0 263.2 L451.2 266.9 L458.3 270.7 L465.4 274.5 L472.6 278.3 L479.7 282.1 L486.8 285.9 L493.9 289.7 L501.0 293.6 L508.0 297.4 L515.1 301.3 L522.2 305.2 L529.2 309.1 L536.3 313.0 L543.3 316.9 L550.4 320.9 L557.4 324.8 L564.4 328.8 L571.5 332.8 L578.5 336.8 L585.5 340.8 L592.5 344.8 L599.5 348.8 L606.5 352.9 L613.5 356.9 L620.4 361.0 L627.4 365.0 L634.4 369.1 L641.3 373.2 L648.3 377.3 L655.2 381.4 L662.2 385.6 L669.1 389.7 L676.0 393.9 L683.0 398.0 L689.9 402.2 L696.8 406.3 L703.7 410.5 L710.6 414.7 L717.5 418.9 L724.4 423.1 L731.3 427.3 L738.2 431.6 L745.1 435.8 L752.0 440.0 L758.8 444.3 L765.7 448.5 L772.6 452.8 L779.4 457.0 L786.3 461.3 L793.2 465.6 L800.0 469.9 L806.9 474.2 L813.7 478.5 L820.5 482.8 L827.4 487.1 L834.2 491.4 L841.0 495.7 L847.9 500.0 L854.7 504.4 L861.5 508.7 L868.3 513.0 L875.1 517.4 L882.0 521.7 L888.8 526.1 L895.6 530.4 L902.4 534.8 L909.2 539.1 L916.0 543.5 L922.8 547.8 L929.6 552.2 L936.4 556.6 L943.1 560.9 L949.9 565.3 L956.7 569.7 L963.5 574.1 L970.3 578.4 L977.1 582.8 L983.8 587.2 L990.6 591.6 L997.4 596.0 L1004.2 600.3 L1010.9 604.7 L1017.7 609.1 L1024.5 613.5 L1031.3 617.9 L1038.0 622.3 L1044.8 626.6 L1051.6 631.0 L1058.3 635.4 L1065.1 639.8 L1071.9 644.2 L1078.6 648.5 L1085.4 652.9" stroke="#00ff00" stroke-width="1.12" stroke-linejoin="round"/>
<path d="M107.6 151.7 L115.1 154.8 L122.6 158.0 L130.1 161.2 L137.5 164.4 L145.0 167.6 L152.5 170.8 L159.9 174.1 L167.3 177.3 L174.7 180.6 L182.2 184.0 L189.5 187.3 L196.9 190.7 L204.3 194.0 L211.7 197.4 L219.0 200.9 L226.4 204.3 L233.7 207.7 L241.0 211.2 L248.4 214.7 L255.7 218.2 L263.0 221.8 L270.3 225.3 L277.5 228.9 L284.8 232.5 L292.1 236.1 L299.3 239.7 L306.6 243.3 L313.8 247.0 L321.0 250.6 L328.2 254.3 L335.5 258.0 L342.7 261.7 L349.8 265.5 L357.0 269.2 L364.2 273.0 L371.4 276.8 L378.5 280.6 L385.7 284.4 L392.8 288.2 L399.9 292.1 L407.1 295.9 L414.2 299.8 L421.3 303.7 L428.4 307.6 L435.5 311.5 L442.6 315.5 L449.6 319.4 L456.7 323.4 L463.8 327.3 L470.8 331.3 L477.9 335.3 L484.9 339.3 L492.0 343.4 L499.0 347.4 L506.0 351.5 L513.0 355.5 L520.0 359.6 L527.0 363.7 L534.0 367.8 L541.0 371.9 L548.0 376.0 L555.0 380.2 L561.9 384.3 L568.9 388.5 L575.8 392.7 L582.8 396.9 L589.7 401.0 L596.7 405.2 L603.6 409.5 L610.5 413.7 L617.4 417.9 L624.3 422.2 L631.3 426.4 L638.2 430.7 L645.1 435.0 L651.9 439.2 L658.8 443.5 L665.7 447.8 L672.6 452.1 L679.5 456.5 L686.3 460.8 L693.2 465.1 L700.0 469.5 L706.9 473.8 L713.7 478.2 L720.6 482.5 L727.4 486.9 L734.3 491.3 L741.1 495.7 L747.9 500.1 L754.7 504.5 L761.5 508.9 L768.4 513.3 L775.2 517.7 L782.0 522.1 L788.8 526.6 L795.6 531.0 L802.4 535.4 L809.1 539.9 L815.9 544.3 L822.7 548.8 L829.5 553.3 L836.3 557.7 L843.0 562.2 L849.8 566.7 L856.6 571.2 L863.3 575.7 L870.1 580.1 L876.8 584.6 L883.6 589.1 L890.4 593.6 L897.1 598.1 L903.8 602.7 L910.6 607.2 L917.3 611.7 L924.1 616.2 L930.8 620.7 L937.5 625.2 L944.3 629.8 L951.0 634.3 L957.7 638.8 L964.5 643.3 L971.2 647.9 L977.9 652.4 L984.6 656.9 L991.4 661.5 L998.1 666.0 L1004.8 670.5 L1011.5 675.1 L1018.2 679.6 L1024.9 684.1 L1031.6 688.7 L1038.4 693.2 L1045.1 697.7 L1051.8 702.3 L1058.5 706.8 L1065.2 711.3 L1071.9 715.9 L1078.6 720.4" stroke="#00ff00" stroke-width="1.12" stroke-linejoin="round"/>
<path d="M0.0 265.0 L6.1 270.3 L12.3 275.5 L18.5 280.7 L24.6 286.0 L30.8 291.1 L37.1 296.3 L43.3 301.5 L49.5 306.6 L55.8 311.7 L62.1 316.8 L68.3 321.9 L74.6 327.0 L80.9 332.1 L87.3 337.1 L93.6 342.2 L99.9 347.2 L106.3 352.2 L112.7 357.2 L119.0 362.2 L125.4 367.2 L131.8 372.1 L138.2 377.1 L144.6 382.0 L151.0 387.0 L157.4 391.9 L163.9 396.8 L170.3 401.7 L176.7 406.6 L183.2 411.5 L189.6 416.4 L196.1 421.3 L202.6 426.2 L209.0 431.1 L215.5 436.0 L222.0 440.8 L228.5 445.7 L234.9 450.6 L241.4 455.4 L247.9 460.3 L254.4 465.1 L260.9 470.0 L267.3 474.8 L273.8 479.7 L280.3 484.6 L286.8 489.4 L293.3 494.3 L299.8 499.1 L306.2 504.0 L312.7 508.9 L319.2 513.7 L325.7 518.6 L332.1 523.5 L338.6 528.4 L345.0 533.3 L351.5 538.2 L357.9 543.1 L364.4 548.0 L370.8 552.9 L377.2 557.8 L383.7 562.7 L390.1 567.7 L396.5 572.6 L402.9 577.6 L409.3 582.6 L415.7 587.5 L422.0 592.5 L428.4 597.5 L434.7 602.6 L441.1 607.6 L447.4 612.6 L453.7 617.7 L460.0 622.7 L466.3 627.8 L472.6 632.9 L478.9 638.0 L485.1 643.2 L491.4 648.3 L497.6 653.5 L503.8 658.7 L510.0 663.9 L516.2 669.1 L522.4 674.3 L528.5 679.6 L534.7 684.8 L540.8 690.1 L546.9 695.4 L553.0 700.8 L559.0 706.1 L565.1 711.5 L571.1 716.9 L577.1 722.4 L583.1 727.8 L589.0 733.3 L595.0 738.8 L600.9 744.3 L606.8 749.9 L612.7 755.4 L618.6 761.0 L624.4 766.7 L630.2 772.3 L636.0 778.0" stroke="#00ff00" stroke-width="1.12" stroke-linejoin="round"/>
<path d="M-0.0 310.7 L6.1 316.0 L12.3 321.3 L18.5 326.6 L24.6 331.8 L30.8 337.1 L37.0 342.3 L43.2 347.6 L49.5 352.8 L55.7 358.0 L62.0 363.1 L68.2 368.3 L74.5 373.5 L80.8 378.6 L87.0 383.8 L93.3 388.9 L99.6 394.0 L106.0 399.2 L112.3 404.3 L118.6 409.4 L124.9 414.5 L131.3 419.5 L137.6 424.6 L144.0 429.7 L150.3 434.8 L156.7 439.8 L163.0 444.9 L169.4 449.9 L175.8 455.0 L182.2 460.0 L188.5 465.1 L194.9 470.1 L201.3 475.1 L207.7 480.2 L214.1 485.2 L220.5 490.2 L226.9 495.3 L233.2 500.3 L239.6 505.3 L246.0 510.3 L252.4 515.4 L258.8 520.4 L265.2 525.5 L271.6 530.5 L277.9 535.5 L284.3 540.6 L290.7 545.6 L297.1 550.7 L303.4 555.7 L309.8 560.8 L316.1 565.9 L322.5 570.9 L328.8 576.0 L335.2 581.1 L341.5 586.2 L347.8 591.3 L354.2 596.4 L360.5 601.5 L366.8 606.7 L373.1 611.8 L379.4 616.9 L385.7 622.1 L391.9 627.3 L398.2 632.4 L404.4 637.6 L410.7 642.8 L416.9 648.0 L423.1 653.3 L429.3 658.5 L435.5 663.8 L441.7 669.0 L447.9 674.3 L454.0 679.6 L460.2 684.9 L466.3 690.2 L472.4 695.6 L478.5 701.0 L484.6 706.3 L490.7 711.7 L496.7 717.1 L502.8 722.6 L508.8 728.0 L514.8 733.5 L520.8 739.0 L526.8 744.5 L532.7 750.0 L538.7 755.6 L544.6 761.1 L550.5 766.7 L556.3 772.4 L562.2 778.0" stroke="#00ff00" stroke-width="1.12" stroke-linejoin="round"/>
<path d="M0.0 347.0 L6.1 352.4 L12.2 357.8 L18.2 363.1 L24.3 368.5 L30.4 373.9 L36.5 379.3 L42.5 384.6 L48.6 390.0 L54.7 395.4 L60.8 400.8 L66.8 406.2 L72.9 411.5 L79.0 416.9 L85.0 422.3 L91.1 427.7 L97.2 433.1 L103.3 438.5 L109.3 443.8 L115.4 449.2 L121.5 454.6 L127.6 460.0 L133.6 465.4 L139.7 470.7 L145.8 476.1 L151.8 481.5 L157.9 486.9 L164.0 492.3 L170.1 497.7 L176.1 503.1 L182.2 508.4 L188.3 513.8 L194.3 519.2 L200.4 524.6 L206.5 530.0 L212.5 535.4 L218.6 540.8 L224.7 546.1 L230.7 551.5 L236.8 556.9 L242.9 562.3 L248.9 567.7 L255.0 573.1 L261.1 578.5 L267.1 583.9 L273.2 589.2 L279.3 594.6 L285.3 600.0 L291.4 605.4 L297.5 610.8 L303.5 616.2 L309.6 621.6 L315.7 627.0 L321.7 632.4 L327.8 637.7 L333.9 643.1 L339.9 648.5 L346.0 653.9 L352.1 659.3 L358.1 664.7 L364.2 670.1 L370.2 675.5 L376.3 680.9 L382.4 686.3 L388.4 691.7 L394.5 697.1 L400.6 702.5 L406.6 707.9 L412.7 713.2 L418.7 718.6 L424.8 724.0 L430.9 729.4 L436.9 734.8 L443.0 740.2 L449.0 745.6 L455.1 751.0 L461.2 756.4 L467.2 761.8 L473.3 767.2 L479.3 772.6 L485.4 778.0" stroke="#00ff00" stroke-width="1.12" stroke-linejoin="round"/>
<path d="M0.0 391.3 L6.0 396.8 L12.0 402.3 L18.0 407.8 L24.0 413.3 L30.0 418.8 L36.0 424.3 L41.9 429.8 L47.9 435.3 L53.9 440.9 L59.9 446.4 L65.9 451.9 L71.9 457.4 L77.9 462.9 L83.9 468.4 L89.8 473.9 L95.8 479.4 L101.8 484.9 L107.8 490.5 L113.8 496.0 L119.8 501.5 L125.7 507.0 L131.7 512.5 L137.7 518.0 L143.7 523.6 L149.7 529.1 L155.6 534.6 L161.6 540.1 L167.6 545.6 L173.6 551.2 L179.6 556.7 L185.5 562.2 L191.5 567.7 L197.5 573.2 L203.5 578.8 L209.4 584.3 L215.4 589.8 L221.4 595.3 L227.4 600.9 L233.3 606.4 L239.3 611.9 L245.3 617.4 L251.2 623.0 L257.2 628.5 L263.2 634.0 L269.1 639.6 L275.1 645.1 L281.1 650.6 L287.1 656.2 L293.0 661.7 L299.0 667.2 L305.0 672.8 L310.9 678.3 L316.9 683.8 L322.8 689.4 L328.8 694.9 L334.8 700.4 L340.7 706.0 L346.7 711.5 L352.7 717.0 L358.6 722.6 L364.6 728.1 L370.5 733.7 L376.5 739.2 L382.5 744.7 L388.4 750.3 L394.4 755.8 L400.3 761.4 L406.3 766.9 L412.2 772.5 L418.2 778.0" stroke="#00ff00" stroke-width="1.12" stroke-linejoin="round"/>
<path d="M1126.8 591.1 L1118.6 666.1" stroke="#000000" stroke-width="1"/>
<path d="M1085.4 652.9 L1078.6 720.4" stroke="#000000" stroke-width="1"/>
<path d="M1091.1 571.2 L1033.5 678.7 L1028.9 685.6" stroke="#000000" stroke-width="1"/>
<path d="M975.1 738.9 L962.5 778.0" stroke="#000000" stroke-width="1"/>
<path d="M1186.1 433.8 L1168.1 477.6" stroke="#000000" stroke-width="1"/>
<path d="M1159.8 472.5 L1142.7 513.7" stroke="#000000" stroke-width="1"/>
<path d="M1216.3 449.5 L1209.5 500.1" stroke="#000000" stroke-width="1"/>
<path d="M1190.4 489.6 L1169.2 527.5" stroke="#000000" stroke-width="1"/>
<path d="M200.8 275.5 L254.3 256.2 L262.4 299.7 L209.7 317.2 L200.8 275.5" stroke="#000000" stroke-width="1"/>
<path d="M1.7 131.0 L254.3 256.2" stroke="#ff0000" stroke-width="1"/>
<path d="M0.0 164.2 L200.8 275.5" stroke="#ff0000" stroke-width="1"/>
<path d="M0.0 195.6 L209.7 317.2" stroke="#ff0000" stroke-width="1"/>
<path d="M10.3 167.3 L262.4 299.7" stroke="#ff0000" stroke-width="1"/>
<path d="M30.0 325.8 L54.7 343.8 L65.4 387.6 L40.7 366.9 L30.0 325.8" stroke="#000000" stroke-width="1"/>
<path d="M370.3 201.0 L399.2 214.4 L404.3 253.8 L375.8 238.8 L370.3 201.0" stroke="#000000" stroke-width="1"/>
<path d="M30.0 325.8 L370.3 201.0" stroke="#ff0000" stroke-width="1"/>
<path d="M54.7 343.8 L399.2 214.4" stroke="#ff0000" stroke-width="1"/>
<path d="M65.4 387.6 L404.3 253.8" stroke="#ff0000" stroke-width="1"/>
<path d="M40.7 366.9 L375.8 238.8" stroke="#ff0000" stroke-width="1"/>
<path d="M175.3 441.3 L208.1 468.2 L218.0 513.9 L185.3 487.0 L175.3 441.3" stroke="#000000" stroke-width="1"/>
<path d="M537.4 285.0 L573.4 304.2 L576.6 346.1 L541.3 327.3 L537.4 285.0" stroke="#000000" stroke-width="1"/>
<path d="M175.3 441.3 L537.4 285.0" stroke="#ff0000" stroke-width="1"/>
<path d="M208.1 468.2 L573.4 304.2" stroke="#ff0000" stroke-width="1"/>
<path d="M218.0 513.9 L576.6 346.1" stroke="#ff0000" stroke-width="1"/>
<path d="M185.3 487.0 L541.3 327.3" stroke="#ff0000" stroke-width="1"/>
<path d="M345.6 585.0 L388.1 622.1 L395.6 669.7 L353.7 634.8 L345.6 585.0" stroke="#000000" stroke-width="1"/>
<path d="M345.6 585.0 L388.1 622.1" stroke="#ff0000" stroke-width="1"/>
<path d="M345.6 585.0 L0.0 774.2" stroke="#ff0000" stroke-width="1"/>
<path d="M388.1 622.1 L118.6 778.0" stroke="#ff0000" stroke-width="1"/>
<path d="M353.7 634.8 L106.5 778.0" stroke="#ff0000" stroke-width="1"/>
<path d="M395.6 669.7 L216.7 778.0" stroke="#ff0000" stroke-width="1"/>
<path d="M121.3 741.7 L56.8 778.0" stroke="#ff0000" stroke-width="1"/>
<path d="M121.3 741.7 L152.2 778.0" stroke="#ff0000" stroke-width="1"/>
<path d="M121.3 741.7 L130.7 778.0" stroke="#000000" stroke-width="1"/>
<path d="M361.8 379.5 L418.2 355.3 L424.4 402.9 L368.5 424.7 L361.8 379.5" stroke="#000000" stroke-width="1"/>
<path d="M418.2 355.3 L688.5 534.0 L991.0 749.0 L1008.3 762.7" stroke="#ff0000" stroke-width="1"/>
<path d="M424.4 402.9 L618.6 534.0 L947.7 778.0" stroke="#ff0000" stroke-width="1"/>
<path d="M361.8 379.5 L582.3 534.0 L906.0 778.0" stroke="#ff0000" stroke-width="1"/>
<path d="M368.5 424.7 L520.6 534.0 L835.0 778.0" stroke="#ff0000" stroke-width="1"/>
<path d="M706.0 -0.0 L704.1 7.9 L702.3 15.9 L700.4 23.8 L698.6 31.7 L696.7 39.7 L694.9 47.6 L693.0 55.5 L691.2 63.5 L689.3 71.4 L687.5 79.4 L685.6 87.3 L683.8 95.2 L681.9 103.2 L680.1 111.1 L678.2 119.0 L676.4 127.0 L674.6 134.9 L672.7 142.8 L670.9 150.8 L669.0 158.7 L667.2 166.7 L665.3 174.6 L663.5 182.5 L661.7 190.5 L659.8 198.4 L658.0 206.3 L656.1 214.3 L654.3 222.2 L652.5 230.2 L650.6 238.1 L648.8 246.0 L646.9 254.0 L645.1 261.9 L643.3 269.9 L641.4 277.8 L639.6 285.7 L637.7 293.7 L635.9 301.6 L634.1 309.5 L632.2 317.5 L630.4 325.4 L628.6 333.4 L626.7 341.3 L624.9 349.2 L623.1 357.2 L621.2 365.1 L619.4 373.1 L617.6 381.0 L615.7 388.9 L613.9 396.9 L612.1 404.8 L610.2 412.8 L608.4 420.7 L606.6 428.6 L604.7 436.6 L602.9 444.5 L601.1 452.5 L599.2 460.4 L597.4 468.3 L595.6 476.3 L593.8 484.2 L591.9 492.2 L590.1 500.1 L588.3 508.0 L586.4 516.0 L584.6 523.9 L582.8 531.9 L580.9 539.8 L579.1 547.7 L577.3 555.7 L575.4 563.6 L573.6 571.6 L571.8 579.5 L570.0 587.4 L568.1 595.4 L566.3 603.3 L564.5 611.3 L562.6 619.2 L560.8 627.1 L559.0 635.1 L557.1 643.0 L555.3 651.0 L553.5 658.9 L551.6 666.8 L549.8 674.8 L548.0 682.7 L546.2 690.7 L544.3 698.6 L542.5 706.5 L540.7 714.5 L538.8 722.4 L537.0 730.4 L535.2 738.3 L533.3 746.2 L531.5 754.2 L529.7 762.1 L527.8 770.1 L526.0 778.0" stroke="#ff0000" stroke-width="1" stroke-linejoin="round"/>
<path d="M1168.4 64.7 L1169.4 72.8 L1170.2 80.9 L1170.9 88.9 L1171.6 97.0 L1172.1 105.1 L1172.5 113.2 L1172.8 121.3 L1173.0 129.4 L1173.1 137.5 L1173.1 145.5 L1173.1 153.6 L1172.9 161.7 L1172.6 169.8 L1172.2 177.8 L1171.8 185.9 L1171.2 194.0 L1170.6 202.0 L1169.8 210.1 L1169.0 218.1 L1168.1 226.1 L1167.2 234.1 L1166.1 242.2 L1165.0 250.2 L1163.8 258.2 L1162.5 266.2 L1161.1 274.1 L1159.7 282.1 L1158.2 290.0 L1156.6 298.0 L1155.0 305.9 L1153.3 313.8 L1151.5 321.7 L1149.7 329.6 L1147.8 337.5 L1145.9 345.3 L1143.9 353.2 L1141.8 361.0 L1139.7 368.8 L1137.5 376.6 L1135.2 384.3 L1132.8 392.0 L1130.3 399.6 L1127.7 407.2 L1125.0 414.8 L1122.1 422.3 L1119.1 429.7 L1115.8 437.1 L1112.3 444.3 L1108.6 451.5 L1104.8 458.7 L1100.8 465.7 L1096.8 472.8 L1092.8 479.8 L1088.7 486.7 L1084.8 493.7 L1081.2 500.9 L1078.0 508.2 L1075.0 515.7 L1071.9 523.1 L1068.4 530.2 L1064.2 536.8 L1059.3 543.1 L1054.0 549.1 L1048.5 555.1 L1043.0 561.0 L1037.6 567.0 L1032.1 573.0 L1026.6 579.0 L1021.1 585.0 L1015.6 591.0 L1010.0 596.9 L1004.4 602.8 L998.8 608.6 L993.0 614.4 L987.2 620.0 L981.3 625.5 L975.3 631.0 L969.2 636.3 L963.0 641.4 L956.7 646.5 L950.3 651.4 L943.8 656.1 L937.2 660.8 L930.5 665.3 L923.7 669.6 L916.9 673.9 L909.9 678.0 L902.9 682.1 L895.8 685.9 L888.7 689.7 L881.5 693.4 L874.2 696.9 L866.8 700.3 L859.4 703.6 L852.0 706.8 L844.5 709.9 L836.9 712.9 L829.3 715.8 L821.7 718.5 L814.0 721.2 L806.3 723.7 L798.5 726.2 L790.8 728.5 L783.0 730.8 L775.2 732.9 L767.3 735.0 L759.5 736.9 L751.6 738.8 L743.8 740.6 L735.9 742.4 L728.0 744.1 L720.1 745.8 L712.2 747.5 L704.3 749.1 L696.4 750.7 L688.5 752.4 L680.5 754.0 L672.6 755.7 L664.7 757.4 L656.8 759.1 L649.0 760.9 L641.1 762.7 L633.2 764.6 L625.4 766.6 L617.5 768.7 L609.7 770.8 L601.9 773.1 L594.2 775.5 L586.4 778.0" stroke="#ff0000" stroke-width="1" stroke-linejoin="round"/>
<path d="M1194.5 79.3 L1195.1 87.4 L1195.7 95.5 L1196.1 103.6 L1196.4 111.7 L1196.6 119.8 L1196.7 127.9 L1196.7 136.0 L1196.6 144.1 L1196.4 152.2 L1196.1 160.3 L1195.7 168.4 L1195.2 176.5 L1194.6 184.5 L1193.9 192.6 L1193.1 200.6 L1192.2 208.7 L1191.1 216.7 L1190.0 224.7 L1188.8 232.7 L1187.5 240.7 L1186.1 248.6 L1184.6 256.6 L1183.1 264.5 L1181.4 272.4 L1179.6 280.3 L1177.7 288.2 L1175.8 296.1 L1173.7 303.9 L1171.6 311.7 L1169.4 319.5 L1167.0 327.2 L1164.6 335.0 L1162.1 342.7 L1159.5 350.4 L1156.9 358.0 L1154.1 365.7 L1151.2 373.3 L1148.3 380.8 L1145.2 388.3 L1142.1 395.8 L1138.9 403.2 L1135.5 410.6 L1132.1 418.0 L1128.6 425.3 L1125.0 432.5 L1121.3 439.7 L1117.4 446.8 L1113.5 453.9 L1109.5 460.9 L1105.4 467.9 L1101.1 474.8 L1096.8 481.6 L1092.4 488.3 L1087.8 495.0 L1083.1 501.6 L1078.4 508.1 L1073.5 514.6 L1068.5 521.0 L1063.4 527.2 L1058.2 533.4 L1052.8 539.6 L1047.4 545.6 L1041.9 551.5 L1036.2 557.3 L1030.4 563.1 L1024.6 568.7 L1018.6 574.2 L1012.6 579.7 L1006.4 585.0 L1000.2 590.2 L993.8 595.2 L987.4 600.2 L980.9 605.0 L974.3 609.8 L967.7 614.3 L960.9 618.8 L954.1 623.1 L947.2 627.3 L940.2 631.3 L933.1 635.2 L926.0 639.0 L918.8 642.6 L911.6 646.2 L904.3 649.5 L896.9 652.8 L889.5 655.9 L882.0 658.9 L874.5 661.8 L866.9 664.6 L859.3 667.3 L851.6 669.9 L843.9 672.4 L836.2 674.8 L828.4 677.1 L820.6 679.3 L812.7 681.4 L804.9 683.4 L797.0 685.4 L789.0 687.2 L781.1 689.0 L773.1 690.8 L765.1 692.4 L757.1 694.1 L749.1 695.7 L741.1 697.2 L733.1 698.8 L725.1 700.3 L717.0 701.9 L709.0 703.4 L701.0 705.0 L693.1 706.6 L685.1 708.3 L677.1 710.0 L669.2 711.7 L661.3 713.6 L653.5 715.5 L645.6 717.5 L637.8 719.6 L630.0 721.8 L622.3 724.1 L614.6 726.6 L607.0 729.2 L599.4 732.0 L591.9 734.9 L584.5 738.0 L577.0 741.3 L569.7 744.7 L562.5 748.4 L555.8 752.6 L549.8 757.5 L544.9 763.2 L541.3 769.9 L539.4 778.0" stroke="#0000ff" stroke-width="1" stroke-linejoin="round"/>
<path d="M1233.2 115.1 L1233.4 123.2 L1233.5 131.3 L1233.5 139.4 L1233.5 147.5 L1233.4 155.6 L1233.2 163.7 L1232.9 171.8 L1232.6 180.0 L1232.1 188.1 L1231.6 196.2 L1231.1 204.3 L1230.4 212.5 L1229.7 220.6 L1228.9 228.7 L1228.0 236.8 L1227.0 244.9 L1226.0 253.0 L1224.8 261.1 L1223.6 269.2 L1222.4 277.2 L1221.0 285.3 L1219.6 293.3 L1218.0 301.4 L1216.4 309.4 L1214.7 317.4 L1213.0 325.3 L1211.1 333.3 L1209.2 341.2 L1207.2 349.1 L1205.1 357.0 L1202.9 364.9 L1200.6 372.8 L1198.3 380.6 L1195.9 388.4 L1193.4 396.2 L1190.8 403.9 L1188.1 411.6 L1185.3 419.3 L1182.5 426.9 L1179.5 434.5 L1176.5 442.1 L1173.4 449.7 L1170.2 457.2 L1166.9 464.6 L1163.5 472.1 L1160.1 479.5 L1156.5 486.8 L1152.9 494.1 L1149.2 501.4 L1145.4 508.6 L1141.5 515.8 L1137.5 522.9 L1133.4 530.0 L1129.2 537.0 L1125.0 544.0 L1120.6 550.9 L1116.2 557.8 L1111.7 564.6 L1107.1 571.3 L1102.4 578.0 L1097.6 584.6 L1092.8 591.2 L1087.8 597.7 L1082.8 604.1 L1077.7 610.4 L1072.5 616.7 L1067.2 622.9 L1061.8 629.0 L1056.4 635.0 L1050.9 641.0 L1045.2 646.9 L1039.5 652.6 L1033.8 658.3 L1027.9 663.9 L1022.0 669.5 L1015.9 674.9 L1009.8 680.2 L1003.7 685.4 L997.4 690.5 L991.0 695.5 L984.6 700.5 L978.1 705.3 L971.6 710.0 L964.9 714.5 L958.2 719.0 L951.4 723.4 L944.5 727.6 L937.5 731.7 L930.5 735.8 L923.4 739.6 L916.2 743.4 L908.9 747.0 L901.6 750.5 L894.2 753.9 L886.7 757.1 L879.1 760.2 L871.5 763.2 L863.8 766.0 L856.0 768.7 L848.2 771.3 L840.2 773.6 L832.3 775.9 L824.2 778.0" stroke="#ff0000" stroke-width="1" stroke-linejoin="round"/>
<path d="M1256.5 105.4 L1256.5 113.4 L1256.4 121.3 L1256.2 129.3 L1256.0 137.4 L1255.7 145.4 L1255.3 153.4 L1254.8 161.5 L1254.3 169.5 L1253.7 177.6 L1253.0 185.7 L1252.3 193.8 L1251.4 201.9 L1250.5 209.9 L1249.6 218.0 L1248.5 226.1 L1247.4 234.2 L1246.1 242.3 L1244.8 250.3 L1243.5 258.4 L1242.0 266.4 L1240.5 274.5 L1238.8 282.5 L1237.1 290.5 L1235.3 298.5 L1233.5 306.4 L1231.5 314.4 L1229.5 322.3 L1227.3 330.2 L1225.1 338.1 L1222.8 345.9 L1220.4 353.7 L1217.9 361.5 L1215.4 369.2 L1212.7 377.0 L1209.9 384.6 L1207.1 392.3 L1204.2 399.9 L1201.1 407.4 L1198.0 415.0 L1194.8 422.4 L1191.5 429.9 L1188.1 437.2 L1184.6 444.6 L1181.0 451.9 L1177.3 459.1 L1173.5 466.3 L1169.7 473.4 L1165.7 480.4 L1161.6 487.4 L1157.4 494.4 L1153.1 501.2 L1148.7 508.0 L1144.3 514.8 L1139.7 521.5 L1135.0 528.1 L1130.2 534.6 L1125.3 541.1 L1120.3 547.4 L1115.2 553.8 L1110.0 560.0 L1104.8 566.1 L1099.4 572.2 L1093.9 578.2 L1088.4 584.1 L1082.7 589.9 L1077.0 595.6 L1071.2 601.3 L1065.3 606.8 L1059.3 612.3 L1053.3 617.7 L1047.1 622.9 L1040.9 628.1 L1034.6 633.2 L1028.2 638.1 L1021.7 643.0 L1015.2 647.8 L1008.6 652.4 L1001.9 657.0 L995.1 661.4 L988.3 665.7 L981.4 670.0 L974.4 674.1 L967.4 678.1 L960.3 681.9 L953.2 685.7 L946.0 689.3 L938.7 692.8 L931.3 696.2 L923.9 699.5 L916.5 702.7 L909.0 705.7 L901.4 708.7 L893.8 711.5 L886.2 714.2 L878.5 716.9 L870.8 719.4 L863.0 721.9 L855.2 724.3 L847.4 726.6 L839.6 728.9 L831.7 731.0 L823.8 733.1 L815.8 735.2 L807.9 737.1 L799.9 739.1 L791.9 741.0 L783.9 742.8 L775.9 744.6 L767.9 746.3 L759.9 748.1 L751.8 749.8 L743.8 751.4 L735.8 753.1 L727.8 754.7 L719.7 756.3 L711.7 757.9 L703.7 759.5 L695.8 761.1 L687.8 762.7 L679.9 764.3 L671.9 766.0 L664.0 767.6 L656.2 769.3 L648.3 770.9 L640.5 772.7 L632.7 774.4 L625.0 776.2 L617.3 778.0" stroke="#0000ff" stroke-width="1" stroke-linejoin="round"/>
<path d="M1289.6 169.1 L1288.9 177.0 L1288.1 184.9 L1287.2 192.9 L1286.2 200.8 L1285.2 208.8 L1284.1 216.7 L1282.9 224.7 L1281.6 232.6 L1280.3 240.6 L1278.9 248.6 L1277.4 256.5 L1275.8 264.5 L1274.2 272.4 L1272.4 280.4 L1270.6 288.3 L1268.8 296.2 L1266.8 304.1 L1264.7 312.0 L1262.6 319.9 L1260.4 327.7 L1258.1 335.5 L1255.7 343.4 L1253.3 351.1 L1250.7 358.9 L1248.1 366.6 L1245.4 374.3 L1242.6 382.0 L1239.7 389.6 L1236.7 397.2 L1233.7 404.8 L1230.5 412.3 L1227.3 419.7 L1224.0 427.2 L1220.5 434.6 L1217.0 441.9 L1213.5 449.2 L1209.8 456.5 L1206.0 463.6 L1202.1 470.8 L1198.2 477.9 L1194.1 484.9 L1190.0 491.9 L1185.7 498.8 L1181.4 505.6 L1177.0 512.4 L1172.5 519.1 L1167.8 525.7 L1163.1 532.3 L1158.3 538.8 L1153.4 545.2 L1148.4 551.6 L1143.3 557.9 L1138.1 564.0 L1132.8 570.2 L1127.4 576.2 L1121.9 582.1 L1116.4 588.0 L1110.7 593.8 L1104.9 599.5 L1099.1 605.1 L1093.2 610.6 L1087.2 616.0 L1081.1 621.3 L1074.9 626.5 L1068.6 631.7 L1062.3 636.7 L1055.9 641.6 L1049.4 646.4 L1042.8 651.1 L1036.2 655.8 L1029.4 660.3 L1022.7 664.7 L1015.8 669.0 L1008.9 673.1 L1001.9 677.2 L994.9 681.1 L987.7 685.0 L980.6 688.7 L973.3 692.3 L966.0 695.8 L958.7 699.1 L951.3 702.3 L943.8 705.4 L936.3 708.4 L928.7 711.3 L921.1 714.0 L913.4 716.6 L905.7 719.0 L898.0 721.4 L890.2 723.7 L882.4 725.8 L874.5 727.9 L866.6 729.9 L858.7 731.8 L850.7 733.6 L842.7 735.4 L834.7 737.0 L826.7 738.7 L818.7 740.3 L810.7 741.8 L802.6 743.3 L794.6 744.8 L786.5 746.3 L778.4 747.7 L770.4 749.2 L762.3 750.6 L754.2 752.0 L746.2 753.5 L738.2 754.9 L730.1 756.4 L722.1 757.9 L714.2 759.4 L706.2 761.0 L698.3 762.6 L690.3 764.3 L682.5 766.0 L674.6 767.8 L666.8 769.7 L659.1 771.6 L651.3 773.7 L643.6 775.8 L636.0 778.0" stroke="#ff00ff" stroke-width="1" stroke-linejoin="round"/>
<path d="M1238.6 392.4 L1004.6 736.6 L971.7 778.0" stroke="#00ffff" stroke-width="1.4"/>
<path d="M1172.3 164.6 L1196.6 135.7 L1253.7 183.7 L1229.7 218.5 L1172.3 164.6" stroke="#000000" stroke-width="1"/>
<path d="M1069.4 412.5 L1087.5 421.1" stroke="#0000ff" stroke-width="1"/>
<path d="M1062.4 431.6 L1091.5 444.7" stroke="#0000ff" stroke-width="1"/>
<path d="M1069.4 412.5 L1068.0 433.0" stroke="#0000ff" stroke-width="1"/>
<path d="M1087.5 421.1 L1086.5 442.0" stroke="#0000ff" stroke-width="1"/>
<path d="M1069.4 412.5 L1033.2 454.6" stroke="#000000" stroke-width="1"/>
<path d="M1087.5 421.1 L1051.4 464.0" stroke="#000000" stroke-width="1"/>
<path d="M1062.4 431.6 L1026.2 474.3" stroke="#000000" stroke-width="1"/>
<path d="M1091.5 444.7 L1055.4 487.8" stroke="#000000" stroke-width="1"/>
<path d="M1033.2 454.6 L1051.4 464.0" stroke="#ff0000" stroke-width="1"/>
<path d="M1026.2 474.3 L1055.4 487.8" stroke="#ff0000" stroke-width="1"/>
<path d="M1033.2 454.6 L1031.8 476.5" stroke="#ff0000" stroke-width="1"/>
<path d="M1051.4 464.0 L1050.5 485.5" stroke="#ff0000" stroke-width="1"/>
<path d="M1062.4 431.6 L1062.4 439.8 L1062.4 447.9 L1062.3 456.2 L1062.2 464.4 L1062.0 472.7 L1061.7 480.9 L1061.4 489.2 L1061.0 497.5 L1060.6 505.8 L1060.0 514.2 L1059.4 522.5 L1058.7 530.8 L1057.9 539.1 L1057.1 547.4 L1056.1 555.7 L1055.0 564.0 L1053.9 572.3 L1052.6 580.5 L1051.2 588.8 L1049.7 597.0 L1048.1 605.1 L1046.4 613.3 L1044.6 621.4 L1042.6 629.4 L1040.5 637.5 L1038.3 645.5 L1035.9 653.4 L1033.4 661.3 L1030.8 669.1 L1028.0 676.9 L1025.1 684.6 L1022.0 692.2 L1018.7 699.8 L1015.3 707.3 L1011.7 714.8 L1008.0 722.2 L1004.1 729.4 L1000.0 736.7 L995.8 743.8 L991.3 750.8 L986.7 757.7 L981.9 764.6 L976.9 771.3 L971.7 778.0" stroke="#0000ff" stroke-width="1" stroke-linejoin="round"/>
<path d="M1091.5 444.7 L1091.8 453.0 L1092.0 461.3 L1092.1 469.6 L1092.0 477.9 L1091.8 486.2 L1091.5 494.5 L1091.1 502.8 L1090.6 511.0 L1089.9 519.3 L1089.2 527.5 L1088.3 535.7 L1087.3 543.9 L1086.2 552.1 L1085.0 560.2 L1083.7 568.4 L1082.3 576.5 L1080.7 584.6 L1079.1 592.7 L1077.4 600.8 L1075.5 608.8 L1073.6 616.8 L1071.5 624.8 L1069.4 632.8 L1067.1 640.7 L1064.8 648.6 L1062.3 656.5 L1059.8 664.4 L1057.1 672.2 L1054.4 680.0 L1051.5 687.7 L1048.6 695.5 L1045.6 703.2 L1042.5 710.8 L1039.3 718.4 L1036.0 726.0 L1032.6 733.6 L1029.2 741.1 L1025.6 748.5 L1022.0 756.0 L1018.3 763.4 L1014.5 770.7 L1010.6 778.0" stroke="#0000ff" stroke-width="1" stroke-linejoin="round"/>
<path d="M1026.2 474.3 L1026.6 482.6 L1026.9 490.9 L1027.1 499.1 L1027.2 507.4 L1027.2 515.6 L1027.1 523.9 L1026.9 532.1 L1026.6 540.4 L1026.1 548.6 L1025.6 556.8 L1024.9 565.0 L1024.1 573.1 L1023.3 581.3 L1022.3 589.5 L1021.2 597.6 L1020.0 605.7 L1018.7 613.8 L1017.3 621.9 L1015.7 629.9 L1014.1 638.0 L1012.3 646.0 L1010.5 653.9 L1008.5 661.9 L1006.4 669.8 L1004.2 677.7 L1001.9 685.6 L999.5 693.5 L997.0 701.3 L994.4 709.1 L991.7 716.9 L988.9 724.6 L986.0 732.3 L983.0 740.0 L980.0 747.7 L976.9 755.3 L973.6 762.9 L970.4 770.5 L967.0 778.0" stroke="#ff0000" stroke-width="1" stroke-linejoin="round"/>
<path d="M1055.4 487.8 L1055.6 496.3 L1055.7 504.7 L1055.6 513.2 L1055.5 521.7 L1055.2 530.1 L1054.9 538.6 L1054.5 547.0 L1053.9 555.4 L1053.3 563.9 L1052.5 572.3 L1051.7 580.7 L1050.8 589.1 L1049.7 597.5 L1048.6 605.9 L1047.4 614.2 L1046.1 622.6 L1044.7 630.9 L1043.3 639.3 L1041.7 647.6 L1040.1 655.9 L1038.3 664.2 L1036.5 672.4 L1034.6 680.7 L1032.6 688.9 L1030.6 697.1 L1028.5 705.3 L1026.3 713.5 L1024.0 721.6 L1021.6 729.7 L1019.2 737.8 L1016.7 745.9 L1014.1 754.0 L1011.5 762.0 L1008.8 770.0 L1006.0 778.0" stroke="#ff0000" stroke-width="1" stroke-linejoin="round"/>
<path d="M943.4 635.9 L887.9 703.2 L950.4 753.0 L1004.9 682.6 L943.4 635.9" stroke="#000000" stroke-width="1"/>
<path d="M943.4 635.9 L942.0 644.6 L940.4 653.2 L938.5 661.7 L936.4 670.3 L934.1 678.7 L931.5 687.1 L928.7 695.4 L925.6 703.5 L922.2 711.6 L918.6 719.6 L914.8 727.4 L910.7 735.1 L906.3 742.7 L901.7 750.1 L896.7 757.3 L891.6 764.4 L886.1 771.3 L880.4 778.0" stroke="#0000ff" stroke-width="1" stroke-linejoin="round"/>
<path d="M887.9 703.2 L886.6 710.1 L885.1 717.0 L883.6 723.9 L882.0 730.7 L880.4 737.5 L878.6 744.3 L876.8 751.1 L874.8 757.9 L872.8 764.6 L870.7 771.3 L868.5 778.0" stroke="#ff0000" stroke-width="1" stroke-linejoin="round"/>
<path d="M950.4 753.0 L945.0 778.0" stroke="#ff0000" stroke-width="1"/>
<path d="M970.6 778.0 L993.0 748.0" stroke="#0000ff" stroke-width="1"/>
<path d="M530.0 778.0 L543.4 761.0" stroke="#000000" stroke-width="1"/>
<circle cx="328.0" cy="30.0" r="3.1" fill="#fff" stroke="#000" stroke-width="1"/>
<circle cx="1238.6" cy="392.4" r="3.1" fill="#fff" stroke="#000" stroke-width="1"/>
<circle cx="1004.6" cy="736.6" r="3.1" fill="#fff" stroke="#000" stroke-width="1"/>
<circle cx="480.5" cy="707.3" r="3.1" fill="#fff" stroke="#000" stroke-width="1"/>
<circle cx="1172.3" cy="164.6" r="3.1" fill="#fff" stroke="#000" stroke-width="1"/>
<circle cx="1196.6" cy="135.7" r="3.1" fill="#fff" stroke="#000" stroke-width="1"/>
<circle cx="1229.7" cy="218.5" r="3.1" fill="#fff" stroke="#000" stroke-width="1"/>
<circle cx="1253.7" cy="183.7" r="3.1" fill="#fff" stroke="#000" stroke-width="1"/>
<circle cx="611.6" cy="158.5" r="3.1" fill="#fff" stroke="#000" stroke-width="1"/>
<circle cx="536.7" cy="188.6" r="3.1" fill="#fff" stroke="#000" stroke-width="1"/>
<circle cx="597.2" cy="222.2" r="3.1" fill="#fff" stroke="#000" stroke-width="1"/>
<circle cx="541.7" cy="241.4" r="3.1" fill="#fff" stroke="#000" stroke-width="1"/>
<circle cx="674.7" cy="135.1" r="3.1" fill="#fff" stroke="#000" stroke-width="1"/>
<circle cx="667.6" cy="164.9" r="3.1" fill="#fff" stroke="#000" stroke-width="1"/>
<circle cx="682.3" cy="187.4" r="3.1" fill="#fff" stroke="#000" stroke-width="1"/>
<circle cx="606.5" cy="219.5" r="3.1" fill="#fff" stroke="#000" stroke-width="1"/>
<circle cx="666.7" cy="253.4" r="3.1" fill="#fff" stroke="#000" stroke-width="1"/>
<circle cx="610.6" cy="274.5" r="3.1" fill="#fff" stroke="#000" stroke-width="1"/>
<circle cx="1092.1" cy="468.1" r="3.1" fill="#fff" stroke="#000" stroke-width="1"/>
<circle cx="1080.1" cy="500.1" r="3.1" fill="#fff" stroke="#000" stroke-width="1"/>
<g stroke="#53565c" stroke-width="1"><path d="M36.4 741.9V715.6M36.4 741.9L56.7 732.4M36.4 741.9L57.3 752.7"/></g>
<g font-family="Liberation Sans, sans-serif" font-size="12.5" fill="#4f5257" stroke="none"><text x="38.8" y="715.8">z</text><text x="60" y="730.2">y</text><text x="60.3" y="752.9">x</text></g>
</svg>
<svg class="a" width="0" height="0" style="left:0;top:0"><defs><linearGradient id="gb" x1="0" y1="0" x2="1" y2="1"><stop offset="0" stop-color="#a8bcff"/><stop offset="1" stop-color="#2f4fc8"/></linearGradient><radialGradient id="gs" cx="0.35" cy="0.3" r="0.8"><stop offset="0" stop-color="#b9c8ff"/><stop offset="0.5" stop-color="#3f5fd8"/><stop offset="1" stop-color="#0a1a70"/></radialGradient><linearGradient id="gy" x1="0" y1="0" x2="0" y2="1"><stop offset="0" stop-color="#ffe98a"/><stop offset="1" stop-color="#e8b020"/></linearGradient><linearGradient id="go" x1="0" y1="0" x2="0" y2="1"><stop offset="0" stop-color="#ffd21a"/><stop offset="1" stop-color="#f05a00"/></linearGradient></defs></svg>
<svg class="a" style="left:14px;top:100px" width="24" height="26" viewBox="0 0 24 26" ><path d="M7.3 6.9L1.3 15.3M7.3 6.9L23.1 11.1M11.2 8.0L5.2 17.2M5.8 9.0L21.6 14.1M15.2 9.0L9.2 19.2M4.3 11.1L20.1 17.1M19.2 10.1L13.2 21.2M2.8 13.2L18.6 20.1M23.1 11.1L17.1 23.1M1.3 15.3L17.1 23.1" stroke="#9b9b9b" stroke-width="0.8" fill="none"/><path d="M12.1 14.1L15.9 9.2" stroke="#1fa01f" stroke-width="1.6"/><path d="M12.1 14.1L20.9 16" stroke="#e0202a" stroke-width="1.6"/><rect x="10.3" y="12.3" width="3.6" height="3.6" fill="#fff" stroke="#000" stroke-width="1.1"/></svg>
<svg class="a" style="left:42px;top:100px" width="24" height="26" viewBox="0 0 24 26" ><path d="M7.3 6.9L1.3 15.3M7.3 6.9L23.1 11.1M11.2 8.0L5.2 17.2M5.8 9.0L21.6 14.1M15.2 9.0L9.2 19.2M4.3 11.1L20.1 17.1M19.2 10.1L13.2 21.2M2.8 13.2L18.6 20.1M23.1 11.1L17.1 23.1M1.3 15.3L17.1 23.1" stroke="#9b9b9b" stroke-width="0.8" fill="none"/><path d="M12.1 14.1L15.9 9.2" stroke="#1fa01f" stroke-width="1.6"/><path d="M12.1 14.1L20.9 16" stroke="#e0202a" stroke-width="1.6"/><path d="M12.1 14.1V2" stroke="#000" stroke-width="1.3"/><path d="M9.5 4.4L12.1 1L14.7 4.4Z" fill="#000"/><rect x="10.3" y="12.3" width="3.6" height="3.6" fill="#fff" stroke="#000" stroke-width="1.1"/></svg>
<svg class="a" style="left:70px;top:100px" width="24" height="26" viewBox="0 0 24 26" ><path d="M9.3 6.9L3.3 15.3M9.3 6.9L25.1 11.1M13.2 8.0L7.2 17.2M7.8 9.0L23.6 14.1M17.2 9.0L11.2 19.2M6.3 11.1L22.1 17.1M21.2 10.1L15.2 21.2M4.8 13.2L20.6 20.1M25.1 11.1L19.1 23.1M3.3 15.3L19.1 23.1" stroke="#9b9b9b" stroke-width="0.8" fill="none"/><path d="M14 14L22 16.5" stroke="#e0202a" stroke-width="1.6"/><path d="M14 14L16 10.5" stroke="#1fa01f" stroke-width="1.6"/><rect x="14" y="10.5" width="4.5" height="4" fill="#555" opacity="0.7"/><g transform="translate(2.5 5.5) scale(1.0)"><path d="M0 3.2L4.6 0L10 1.6L10 9.6L5.4 13L0 10.6Z" fill="#6f8cf0" stroke="#101830" stroke-width="1"/><path d="M0 3.2L5.4 4.8L10 1.6M5.4 4.8V13" stroke="#dfe6ff" stroke-width="0.7" fill="none"/><path d="M0 3.2L4.6 0L10 1.6L5.4 4.8Z" fill="#a9bcff"/><path d="M5.4 4.8L10 1.6V9.6L5.4 13Z" fill="#4763d6"/><path d="M0 3.2L4.6 0L10 1.6L10 9.6L5.4 13L0 10.6Z" fill="none" stroke="#101830" stroke-width="1"/></g></svg>
<svg class="a" style="left:98px;top:100px" width="24" height="26" viewBox="0 0 24 26" ><path d="M9.3 4.9L3.3 13.3M9.3 4.9L25.1 9.1M13.2 6.0L7.2 15.2M7.8 7.0L23.6 12.1M17.2 7.0L11.2 17.2M6.3 9.1L22.1 15.1M21.2 8.1L15.2 19.2M4.8 11.2L20.6 18.1M25.1 9.1L19.1 21.1M3.3 13.3L19.1 21.1" stroke="#9b9b9b" stroke-width="0.8" fill="none"/><circle cx="8.5" cy="14.5" r="5.6" fill="url(#gs)" stroke="#0a1440" stroke-width="0.8"/><path d="M13 12.5L18.5 11.6" stroke="#1fa01f" stroke-width="1.6"/><path d="M13 12.5L15.6 19.5" stroke="#e0202a" stroke-width="1.6"/></svg>
<svg class="a" style="left:126px;top:100px" width="24" height="26" viewBox="0 0 24 26" ><path d="M7.3 6.9L1.3 15.3M7.3 6.9L23.1 11.1M11.2 8.0L5.2 17.2M5.8 9.0L21.6 14.1M15.2 9.0L9.2 19.2M4.3 11.1L20.1 17.1M19.2 10.1L13.2 21.2M2.8 13.2L18.6 20.1M23.1 11.1L17.1 23.1M1.3 15.3L17.1 23.1" stroke="#9b9b9b" stroke-width="0.8" fill="none"/><path d="M12.1 14.1L15.9 9.2" stroke="#1fa01f" stroke-width="1.6"/><path d="M12.1 14.1L20.9 16" stroke="#e0202a" stroke-width="1.6"/><path d="M2 22C9 21 10 15 12 12S16 4 22 3.5" stroke="#8a8a8a" stroke-width="2.2" fill="none"/><path d="M12.1 14.1L15.9 9.2" stroke="#1fa01f" stroke-width="1.6"/><path d="M12.1 14.1L20.9 16" stroke="#e0202a" stroke-width="1.6"/><rect x="10.3" y="11.7" width="3.6" height="3.6" fill="#fff" stroke="#000" stroke-width="1.1"/></svg>
<svg class="a" style="left:154px;top:100px" width="24" height="26" viewBox="0 0 24 26" ><path d="M8.3 7.9L2.3 16.3M8.3 7.9L24.1 12.1M12.2 8.9L6.2 18.2M6.8 10.0L22.6 15.1M16.2 10.0L10.2 20.2M5.3 12.1L21.1 18.1M20.2 11.1L14.2 22.2M3.8 14.2L19.6 21.1M24.1 12.1L18.1 24.1M2.3 16.3L18.1 24.1" stroke="#9b9b9b" stroke-width="0.8" fill="none"/><path d="M13.1 15.1L16.9 10.2" stroke="#1fa01f" stroke-width="1.6"/><path d="M13.1 15.1L21.9 17" stroke="#e0202a" stroke-width="1.6"/><path d="M1.5 23.5L17.5 2" stroke="#000" stroke-width="1.1"/><path d="M15.5 2.6A5.6 5.6 0 1 0 18.5 9.5" stroke="#000" stroke-width="1.1" fill="none"/><path d="M16.4 9.2L19 5.4L21.4 9.2Z" fill="#000"/><rect x="11.4" y="7.8" width="3.6" height="3.6" fill="#fff" stroke="#000" stroke-width="1.1"/><rect x="3.0" y="17.8" width="3.6" height="3.6" fill="#fff" stroke="#000" stroke-width="1.1"/></svg>
<svg class="a" style="left:182px;top:100px" width="24" height="26" viewBox="0 0 24 26" ><path d="M7.3 6.9L1.3 15.3M7.3 6.9L23.1 11.1M11.2 8.0L5.2 17.2M5.8 9.0L21.6 14.1M15.2 9.0L9.2 19.2M4.3 11.1L20.1 17.1M19.2 10.1L13.2 21.2M2.8 13.2L18.6 20.1M23.1 11.1L17.1 23.1M1.3 15.3L17.1 23.1" stroke="#9b9b9b" stroke-width="0.8" fill="none"/><path d="M12.1 14.1V1.5" stroke="#1fa01f" stroke-width="1.6"/><path d="M12.1 14.1L20.9 16" stroke="#e0202a" stroke-width="1.6"/></svg>
<svg class="a" style="left:210px;top:100px" width="24" height="26" viewBox="0 0 24 26" ><path d="M7.3 6.9L1.3 15.3M7.3 6.9L23.1 11.1M11.2 8.0L5.2 17.2M5.8 9.0L21.6 14.1M15.2 9.0L9.2 19.2M4.3 11.1L20.1 17.1M19.2 10.1L13.2 21.2M2.8 13.2L18.6 20.1M23.1 11.1L17.1 23.1M1.3 15.3L17.1 23.1" stroke="#9b9b9b" stroke-width="0.8" fill="none"/><path d="M12.1 14.1L15.9 9.2" stroke="#1fa01f" stroke-width="1.6"/><path d="M12.1 14.1L20.9 16" stroke="#e0202a" stroke-width="1.6"/><rect x="10.3" y="12.3" width="3.6" height="3.6" fill="#fff" stroke="#000" stroke-width="1.1"/><rect x="14.4" y="6.2" width="3.6" height="3.6" fill="#fff" stroke="#000" stroke-width="1.1"/><rect x="19.2" y="14.4" width="3.6" height="3.6" fill="#fff" stroke="#000" stroke-width="1.1"/></svg>
<svg class="a" style="left:238px;top:100px" width="24" height="26" viewBox="0 0 24 26" ><path d="M7.3 6.9L1.3 15.3M7.3 6.9L23.1 11.1M11.2 8.0L5.2 17.2M5.8 9.0L21.6 14.1M15.2 9.0L9.2 19.2M4.3 11.1L20.1 17.1M19.2 10.1L13.2 21.2M2.8 13.2L18.6 20.1M23.1 11.1L17.1 23.1M1.3 15.3L17.1 23.1" stroke="#9b9b9b" stroke-width="0.8" fill="none"/><path d="M12.1 14.1L15.9 9.2" stroke="#1fa01f" stroke-width="1.6"/><path d="M12.1 14.1L20.9 16" stroke="#e0202a" stroke-width="1.6"/><rect x="10.3" y="12.3" width="3.6" height="3.6" fill="#fff" stroke="#000" stroke-width="1.1"/><rect x="19.2" y="14.4" width="3.6" height="3.6" fill="#fff" stroke="#000" stroke-width="1.1"/></svg>
<svg class="a" style="left:266px;top:100px" width="24" height="26" viewBox="0 0 24 26" ><path d="M7.3 6.9L1.3 15.3M7.3 6.9L23.1 11.1M11.2 8.0L5.2 17.2M5.8 9.0L21.6 14.1M15.2 9.0L9.2 19.2M4.3 11.1L20.1 17.1M19.2 10.1L13.2 21.2M2.8 13.2L18.6 20.1M23.1 11.1L17.1 23.1M1.3 15.3L17.1 23.1" stroke="#9b9b9b" stroke-width="0.8" fill="none"/><path d="M12.1 14.1L15.9 9.2" stroke="#1fa01f" stroke-width="1.6"/><path d="M12.1 14.1L20.9 16" stroke="#e0202a" stroke-width="1.6"/><path d="M12.1 14.1V3" stroke="#000" stroke-width="1.3"/><rect x="10.3" y="1.2" width="3.6" height="3.6" fill="#fff" stroke="#000" stroke-width="1.1"/><rect x="10.3" y="12.3" width="3.6" height="3.6" fill="#fff" stroke="#000" stroke-width="1.1"/></svg>
<svg class="a" style="left:299px;top:100px" width="24" height="26" viewBox="0 0 24 26" ><path d="M7.3 7.9L1.3 16.3M7.3 7.9L23.1 12.1M11.2 8.9L5.2 18.2M5.8 10.0L21.6 15.1M15.2 10.0L9.2 20.2M4.3 12.1L20.1 18.1M19.2 11.1L13.2 22.2M2.8 14.2L18.6 21.1M23.1 12.1L17.1 24.1M1.3 16.3L17.1 24.1" stroke="#9b9b9b" stroke-width="0.8" fill="none"/><path d="M12.1 15.1L15.9 10.2" stroke="#1fa01f" stroke-width="1.6"/><path d="M12.1 15.1L20.9 17" stroke="#e0202a" stroke-width="1.6"/><path d="M4 12C6 5 14 3 20 8L18.5 11C14 7 10 8 8.5 12.5L11 13.5L2.5 16L1.5 8.5Z" fill="#222" stroke="#000" stroke-width="0.6"/></svg>
<svg class="a" style="left:327px;top:100px" width="24" height="26" viewBox="0 0 24 26" ><path d="M9.3 7.9L3.3 16.3M9.3 7.9L25.1 12.1M13.2 8.9L7.2 18.2M7.8 10.0L23.6 15.1M17.2 10.0L11.2 20.2M6.3 12.1L22.1 18.1M21.2 11.1L15.2 22.2M4.8 14.2L20.6 21.1M25.1 12.1L19.1 24.1M3.3 16.3L19.1 24.1" stroke="#9b9b9b" stroke-width="0.8" fill="none"/><path d="M14.1 15.1L17.9 10.2" stroke="#1fa01f" stroke-width="1.6"/><path d="M14.1 15.1L22.9 17" stroke="#e0202a" stroke-width="1.6"/><path d="M3 2V16L6.3 12.8L8.6 18L10.8 17L8.6 12H13Z" fill="#fff" stroke="#000" stroke-width="1"/></svg>
<svg class="a" style="left:355px;top:100px" width="24" height="26" viewBox="0 0 24 26" ><rect x="2.5" y="2.5" width="19" height="19" fill="#d8d8d8" stroke="#000" stroke-width="1.3"/><path d="M3.0 3V21M3 3.0H21M5.2 3V21M3 5.2H21M7.4 3V21M3 7.4H21M9.6 3V21M3 9.6H21M11.8 3V21M3 11.8H21M14.0 3V21M3 14.0H21M16.2 3V21M3 16.2H21M18.4 3V21M3 18.4H21M20.6 3V21M3 20.6H21" stroke="#555" stroke-width="0.5"/><path d="M11.5 3V11.5" stroke="#1fa01f" stroke-width="1.5"/><path d="M11.5 11.5H21" stroke="#e0202a" stroke-width="1.5"/><rect x="3" y="3" width="4" height="1.3" fill="#1030c0"/></svg>
<svg class="a" style="left:383px;top:100px" width="24" height="26" viewBox="0 0 24 26" ><path d="M9.3 8.4L3.3 16.8M9.3 8.4L25.1 12.6M13.2 9.4L7.2 18.8M7.8 10.5L23.6 15.6M17.2 10.5L11.2 20.7M6.3 12.6L22.1 18.6M21.2 11.6L15.2 22.7M4.8 14.7L20.6 21.6M25.1 12.6L19.1 24.6M3.3 16.8L19.1 24.6" stroke="#9b9b9b" stroke-width="0.8" fill="none"/><path d="M14.1 15.6L17.9 10.7" stroke="#1fa01f" stroke-width="1.6"/><path d="M14.1 15.6L22.9 17.5" stroke="#e0202a" stroke-width="1.6"/><rect x="1.5" y="1.5" width="12.5" height="13" rx="1" fill="#a89a62" stroke="#5a5030" stroke-width="1"/><rect x="3.5" y="2.5" width="8.5" height="5" fill="#e8e8e8" stroke="#777" stroke-width="0.5"/><rect x="4" y="10" width="7" height="4" fill="#8a8a8a" stroke="#555" stroke-width="0.5"/><rect x="5" y="10.8" width="2" height="2.6" fill="#c8b870"/></svg>
<svg class="a" style="left:411px;top:100px" width="24" height="26" viewBox="0 0 24 26" ><path d="M11.3 2.9L5.3 11.3M11.3 2.9L27.1 7.1M15.2 4.0L9.2 13.2M9.8 5.0L25.6 10.1M19.2 5.0L13.2 15.2M8.3 7.1L24.1 13.1M23.2 6.1L17.2 17.2M6.8 9.2L22.6 16.1M27.1 7.1L21.1 19.1M5.3 11.3L21.1 19.1" stroke="#9b9b9b" stroke-width="0.8" fill="none"/><path d="M16.1 10.1L19.9 5.199999999999999" stroke="#1fa01f" stroke-width="1.6"/><path d="M16.1 10.1L24.9 12" stroke="#e0202a" stroke-width="1.6"/><path d="M1.5 22.5V9.5H7L9 11.5H17V14" fill="#f5d060" stroke="#7a5a00" stroke-width="1"/><path d="M1.5 22.5L5 13.5H21.5L17.5 22.5Z" fill="url(#gy)" stroke="#7a5a00" stroke-width="1"/></svg>
<svg class="a" style="left:439px;top:100px" width="24" height="26" viewBox="0 0 24 26" ><path d="M8.3 8.4L2.3 16.8M8.3 8.4L24.1 12.6M12.2 9.4L6.2 18.8M6.8 10.5L22.6 15.6M16.2 10.5L10.2 20.7M5.3 12.6L21.1 18.6M20.2 11.6L14.2 22.7M3.8 14.7L19.6 21.6M24.1 12.6L18.1 24.6M2.3 16.8L18.1 24.6" stroke="#9b9b9b" stroke-width="0.8" fill="none"/><path d="M13.1 15.6L16.9 10.7" stroke="#1fa01f" stroke-width="1.6"/><path d="M13.1 15.6L21.9 17.5" stroke="#e0202a" stroke-width="1.6"/><path d="M9 9L14 2.5H20V1.5H23V7H20V6H16L12 11Z" fill="#8a8a8a" stroke="#444" stroke-width="0.6"/><rect x="20" y="1.2" width="3" height="6" fill="#000"/></svg>
<svg class="a" style="left:471px;top:100px" width="24" height="26" viewBox="0 0 24 26" ><path d="M2 20.5L6.5 15.5H19.5L22.5 20.5Z" fill="#d8d8d8" stroke="#9b9b9b" stroke-width="0.7"/><path d="M4.2 18H21M9 15.5L7.5 20.5M16 15.5L17 20.5" stroke="#9b9b9b" stroke-width="0.6"/><path d="M12.5 18H20" stroke="#e0202a" stroke-width="1.5"/><path d="M12.3 16V22.5" stroke="#1fa01f" stroke-width="1.5"/><path d="M12.3 8V16" stroke="#000" stroke-width="1" stroke-dasharray="1.2 1"/><path d="M5.5 5.5C8.5 1 16 1 19 5.5C16 9.5 8.5 9.5 5.5 5.5Z" fill="#fff" stroke="#000" stroke-width="1"/><circle cx="12.3" cy="5.3" r="2.4" fill="#3050d8"/><circle cx="12.3" cy="5.3" r="0.9" fill="#001"/></svg>
<svg class="a" style="left:500px;top:100px" width="24" height="26" viewBox="0 0 24 26" ><path d="M7.3 7.9L1.3 16.3M7.3 7.9L23.1 12.1M11.2 8.9L5.2 18.2M5.8 10.0L21.6 15.1M15.2 10.0L9.2 20.2M4.3 12.1L20.1 18.1M19.2 11.1L13.2 22.2M2.8 14.2L18.6 21.1M23.1 12.1L17.1 24.1M1.3 16.3L17.1 24.1" stroke="#9b9b9b" stroke-width="0.8" fill="none"/><path d="M12.1 15.1L15.9 10.2" stroke="#1fa01f" stroke-width="1.6"/><path d="M12.1 15.1L20.9 17" stroke="#e0202a" stroke-width="1.6"/><path transform="translate(13 6) rotate(180) scale(0.95)" d="M0 -5L4.2 -0.6H1.9V4H-1.9V-0.6H-4.2Z" fill="#fff" stroke="#000" stroke-width="1.1" stroke-linejoin="miter"/></svg>
<svg class="a" style="left:528px;top:100px" width="24" height="26" viewBox="0 0 24 26" ><path d="M7.3 5.4L1.3 13.8M7.3 5.4L23.1 9.6M11.2 6.5L5.2 15.8M5.8 7.5L21.6 12.6M15.2 7.5L9.2 17.7M4.3 9.6L20.1 15.6M19.2 8.6L13.2 19.7M2.8 11.7L18.6 18.6M23.1 9.6L17.1 21.6M1.3 13.8L17.1 21.6" stroke="#9b9b9b" stroke-width="0.8" fill="none"/><path d="M12.1 12.6L15.9 7.699999999999999" stroke="#1fa01f" stroke-width="1.6"/><path d="M12.1 12.6L20.9 14.5" stroke="#e0202a" stroke-width="1.6"/><path transform="translate(13 18.5) rotate(0) scale(0.95)" d="M0 -5L4.2 -0.6H1.9V4H-1.9V-0.6H-4.2Z" fill="#fff" stroke="#000" stroke-width="1.1" stroke-linejoin="miter"/></svg>
<svg class="a" style="left:556px;top:100px" width="24" height="26" viewBox="0 0 24 26" ><path d="M8.3 6.9L2.3 15.3M8.3 6.9L24.1 11.1M12.2 8.0L6.2 17.2M6.8 9.0L22.6 14.1M16.2 9.0L10.2 19.2M5.3 11.1L21.1 17.1M20.2 10.1L14.2 21.2M3.8 13.2L19.6 20.1M24.1 11.1L18.1 23.1M2.3 15.3L18.1 23.1" stroke="#9b9b9b" stroke-width="0.8" fill="none"/><path d="M13.1 14.1L16.9 9.2" stroke="#1fa01f" stroke-width="1.6"/><path d="M13.1 14.1L21.9 16" stroke="#e0202a" stroke-width="1.6"/><path transform="translate(6 17) rotate(-135) scale(0.95)" d="M0 -5L4.2 -0.6H1.9V4H-1.9V-0.6H-4.2Z" fill="#fff" stroke="#000" stroke-width="1.1" stroke-linejoin="miter"/></svg>
<svg class="a" style="left:584.6px;top:100px" width="24" height="26" viewBox="0 0 24 26" ><path d="M6.3 7.9L0.3 16.3M6.3 7.9L22.1 12.1M10.2 8.9L4.2 18.2M4.8 10.0L20.6 15.1M14.2 10.0L8.2 20.2M3.3 12.1L19.1 18.1M18.2 11.1L12.2 22.2M1.8 14.2L17.6 21.1M22.1 12.1L16.1 24.1M0.3 16.3L16.1 24.1" stroke="#9b9b9b" stroke-width="0.8" fill="none"/><path d="M11.1 15.1L14.9 10.2" stroke="#1fa01f" stroke-width="1.6"/><path d="M11.1 15.1L19.9 17" stroke="#e0202a" stroke-width="1.6"/><path transform="translate(18.5 6) rotate(-135) scale(0.95)" d="M0 -5L4.2 -0.6H1.9V4H-1.9V-0.6H-4.2Z" fill="#fff" stroke="#000" stroke-width="1.1" stroke-linejoin="miter"/></svg>
<svg class="a" style="left:613px;top:100px" width="24" height="26" viewBox="0 0 24 26" ><path d="M4.8 6.9L-1.2 15.3M4.8 6.9L20.6 11.1M8.8 8.0L2.8 17.2M3.3 9.0L19.1 14.1M12.7 9.0L6.7 19.2M1.8 11.1L17.6 17.1M16.7 10.1L10.7 21.2M0.3 13.2L16.1 20.1M20.6 11.1L14.6 23.1M-1.2 15.3L14.6 23.1" stroke="#9b9b9b" stroke-width="0.8" fill="none"/><path d="M9.6 14.1L13.4 9.2" stroke="#1fa01f" stroke-width="1.6"/><path d="M9.6 14.1L18.4 16" stroke="#e0202a" stroke-width="1.6"/><path transform="translate(17 13.5) rotate(-90) scale(0.95)" d="M0 -5L4.2 -0.6H1.9V4H-1.9V-0.6H-4.2Z" fill="#fff" stroke="#000" stroke-width="1.1" stroke-linejoin="miter"/></svg>
<svg class="a" style="left:641px;top:100px" width="24" height="26" viewBox="0 0 24 26" ><path d="M10.3 6.9L4.3 15.3M10.3 6.9L26.1 11.1M14.2 8.0L8.2 17.2M8.8 9.0L24.6 14.1M18.2 9.0L12.2 19.2M7.3 11.1L23.1 17.1M22.2 10.1L16.2 21.2M5.8 13.2L21.6 20.1M26.1 11.1L20.1 23.1M4.3 15.3L20.1 23.1" stroke="#9b9b9b" stroke-width="0.8" fill="none"/><path d="M15.1 14.1L18.9 9.2" stroke="#1fa01f" stroke-width="1.6"/><path d="M15.1 14.1L23.9 16" stroke="#e0202a" stroke-width="1.6"/><path transform="translate(6 13.5) rotate(90) scale(0.95)" d="M0 -5L4.2 -0.6H1.9V4H-1.9V-0.6H-4.2Z" fill="#fff" stroke="#000" stroke-width="1.1" stroke-linejoin="miter"/></svg>
<svg class="a" style="left:673.6px;top:100px" width="24" height="26" viewBox="0 0 24 26" ><path d="M10.3 1.4L4.3 9.8M10.3 1.4L26.1 5.6M14.2 2.5L8.2 11.8M8.8 3.5L24.6 8.6M18.2 3.5L12.2 13.7M7.3 5.6L23.1 11.6M22.2 4.6L16.2 15.7M5.8 7.7L21.6 14.6M26.1 5.6L20.1 17.6M4.3 9.8L20.1 17.6" stroke="#9b9b9b" stroke-width="0.8" fill="none"/><path d="M15.5 8.5L17.5 2" stroke="#e0202a" stroke-width="1.5"/><path d="M15.5 8.5L10.5 7.5" stroke="#1fa01f" stroke-width="1.5"/><rect x="15.5" y="7.5" width="4.5" height="4" fill="#555" opacity="0.75"/><g transform="translate(5 10) scale(0.95)"><path d="M0 3.2L4.6 0L10 1.6L10 9.6L5.4 13L0 10.6Z" fill="#6f8cf0" stroke="#101830" stroke-width="1"/><path d="M0 3.2L5.4 4.8L10 1.6M5.4 4.8V13" stroke="#dfe6ff" stroke-width="0.7" fill="none"/><path d="M0 3.2L4.6 0L10 1.6L5.4 4.8Z" fill="#a9bcff"/><path d="M5.4 4.8L10 1.6V9.6L5.4 13Z" fill="#4763d6"/><path d="M0 3.2L4.6 0L10 1.6L10 9.6L5.4 13L0 10.6Z" fill="none" stroke="#101830" stroke-width="1"/></g></svg>
<svg class="a" style="left:701px;top:100px" width="24" height="26" viewBox="0 0 24 26" ><path d="M9.3 1.9L3.3 10.3M9.3 1.9L25.1 6.1M13.2 3.0L7.2 12.2M7.8 4.0L23.6 9.1M17.2 4.0L11.2 14.2M6.3 6.1L22.1 12.1M21.2 5.1L15.2 16.2M4.8 8.2L20.6 15.1M25.1 6.1L19.1 18.1M3.3 10.3L19.1 18.1" stroke="#9b9b9b" stroke-width="0.8" fill="none"/><path d="M3 12L12 8L21 13L13 20Z" fill="#3a55c8" stroke="#0a1440" stroke-width="0.8"/><path d="M3 12V15.5L13 23.5V20ZM13 20V23.5L21 16.5V13Z" fill="#2a40a8" stroke="#0a1440" stroke-width="0.8"/><path d="M8 10.5L13.5 8L18.5 10.8L13.5 14.5Z" fill="#f0b820" stroke="#8a6000" stroke-width="0.5"/><path d="M8 10.5V12.5L13.5 16.5V14.5ZM13.5 14.5V16.5L18.5 12.8V10.8Z" fill="#d89810" stroke="#8a6000" stroke-width="0.5"/><path d="M12.5 9.5L20 6" stroke="#e0202a" stroke-width="1.5"/><path d="M12.5 9.5L10.5 3.5" stroke="#1fa01f" stroke-width="1.5"/></svg>
<svg class="a" style="left:4px;top:146px" width="27" height="27" viewBox="0 0 27 27" ><path d="M7.5 4.3V17.5L10.8 14.6L13.5 19.6L15.6 18.6L13.2 13.9L17.5 13.5Z" fill="#fff" stroke="#222" stroke-width="1"/></svg>
<svg class="a" style="left:32px;top:146px" width="27" height="27" viewBox="0 0 27 27" ><circle cx="11.4" cy="11.3" r="2" fill="#fff" stroke="#000" stroke-width="1"/><path d="M25.6 21V25.6H21Z" fill="#7d7d7d"/></svg>
<svg class="a" style="left:4px;top:174px" width="27" height="27" viewBox="0 0 27 27" ><path d="M4.9 18.9L9.9 6L18.9 16" fill="none" stroke="#000" stroke-width="1"/><rect x="3.2" y="17.2" width="3.4" height="3.4" fill="#fff" stroke="#000" stroke-width="1.1"/><rect x="8.2" y="4.3" width="3.4" height="3.4" fill="#fff" stroke="#000" stroke-width="1.1"/><rect x="17.2" y="14.3" width="3.4" height="3.4" fill="#fff" stroke="#000" stroke-width="1.1"/><path d="M25.6 21V25.6H21Z" fill="#7d7d7d"/></svg>
<svg class="a" style="left:32px;top:174px" width="27" height="27" viewBox="0 0 27 27" ><path d="M4.1 6H11.5C21 6 21 18.1 11.5 18.1H4.1" fill="none" stroke="#000" stroke-width="1.1"/><rect x="2.4" y="4.3" width="3.4" height="3.4" fill="#fff" stroke="#000" stroke-width="1.1"/><rect x="16.4" y="1.1" width="3.4" height="3.4" fill="#fff" stroke="#000" stroke-width="1.1"/><rect x="2.4" y="16.4" width="3.4" height="3.4" fill="#fff" stroke="#000" stroke-width="1.1"/><rect x="18.2" y="18.2" width="3.4" height="3.4" fill="#fff" stroke="#000" stroke-width="1.1"/><path d="M25.6 21V25.6H21Z" fill="#7d7d7d"/></svg>
<svg class="a" style="left:4px;top:202px" width="27" height="27" viewBox="0 0 27 27" ><circle cx="11.8" cy="10.9" r="9.2" fill="none" stroke="#000" stroke-width="1.1"/><path d="M11.8 10.9L17.8 5.2" stroke="#000" stroke-width="0.8"/><rect x="10.1" y="9.2" width="3.4" height="3.4" fill="#fff" stroke="#000" stroke-width="1.1"/><rect x="16.1" y="3.5" width="3.4" height="3.4" fill="#fff" stroke="#000" stroke-width="1.1"/><path d="M25.6 21V25.6H21Z" fill="#7d7d7d"/></svg>
<svg class="a" style="left:32px;top:202px" width="27" height="27" viewBox="0 0 27 27" ><ellipse cx="12.1" cy="12.8" rx="9.8" ry="6.4" fill="none" stroke="#000" stroke-width="1.1"/><path d="M12.1 5.9V12.8H21" stroke="#000" stroke-width="0.8" fill="none"/><rect x="10.4" y="11.1" width="3.4" height="3.4" fill="#fff" stroke="#000" stroke-width="1.1"/><rect x="10.4" y="4.2" width="3.4" height="3.4" fill="#fff" stroke="#000" stroke-width="1.1"/><rect x="19.3" y="11.4" width="3.4" height="3.4" fill="#fff" stroke="#000" stroke-width="1.1"/><path d="M25.6 21V25.6H21Z" fill="#7d7d7d"/></svg>
<svg class="a" style="left:4px;top:230px" width="27" height="27" viewBox="0 0 27 27" ><path d="M4.9 3.7C12 4.5 17 8 18.9 11.9" fill="none" stroke="#000" stroke-width="1.2"/><path d="M4.9 3.7V20.2L18.9 11.9" fill="none" stroke="#333" stroke-width="0.7"/><rect x="3.2" y="2.0" width="3.4" height="3.4" fill="#fff" stroke="#000" stroke-width="1.1"/><rect x="17.2" y="10.2" width="3.4" height="3.4" fill="#fff" stroke="#000" stroke-width="1.1"/><rect x="3.2" y="18.5" width="3.4" height="3.4" fill="#fff" stroke="#000" stroke-width="1.1"/><path d="M25.6 21V25.6H21Z" fill="#7d7d7d"/></svg>
<svg class="a" style="left:32px;top:230px" width="27" height="27" viewBox="0 0 27 27" ><rect x="3.8" y="6.6" width="16.5" height="10.7" fill="none" stroke="#000" stroke-width="1.2"/><rect x="18.3" y="5.1" width="3.4" height="3.4" fill="#fff" stroke="#000" stroke-width="1.1"/><rect x="2.1" y="15.6" width="3.4" height="3.4" fill="#fff" stroke="#000" stroke-width="1.1"/><path d="M25.6 21V25.6H21Z" fill="#7d7d7d"/></svg>
<svg class="a" style="left:4px;top:258px" width="27" height="27" viewBox="0 0 27 27" ><path d="M3.4 10.8L7.6 3.6H16L20.2 10.8L16 18H7.6Z" fill="none" stroke="#000" stroke-width="1.1"/><path d="M11.8 10.8H19.2" stroke="#000" stroke-width="0.8"/><rect x="10.1" y="9.1" width="3.4" height="3.4" fill="#fff" stroke="#000" stroke-width="1.1"/><rect x="17.5" y="9.1" width="3.4" height="3.4" fill="#fff" stroke="#000" stroke-width="1.1"/><path d="M25.6 21V25.6H21Z" fill="#7d7d7d"/></svg>
<svg class="a" style="left:32px;top:258px" width="27" height="27" viewBox="0 0 27 27" ><path d="M3.8 3.9H20.3V19" fill="none" stroke="#999" stroke-width="0.8"/><path d="M3.8 3.9C14 3.9 19.9 9 19.9 19" fill="none" stroke="#000" stroke-width="1.8"/><rect x="2.1" y="2.2" width="3.4" height="3.4" fill="#fff" stroke="#000" stroke-width="1.1"/><rect x="18.2" y="17.3" width="3.4" height="3.4" fill="#fff" stroke="#000" stroke-width="1.1"/><path d="M25.6 21V25.6H21Z" fill="#7d7d7d"/></svg>
<svg class="a" style="left:4px;top:286px" width="27" height="27" viewBox="0 0 27 27" ><path d="M8.2 3.4L19.6 3.4C19 9 17.5 15 14.9 19.9C11 17.5 7.5 15.8 3.9 14.6C6.5 10.5 7.6 7 8.2 3.4Z" fill="url(#gb)" stroke="#101830" stroke-width="0.9"/><path d="M13.8 3.4C13 9 11.3 13.5 9.2 17M6.6 9.5C10.5 10 14.5 11 18.2 12.3" fill="none" stroke="#101830" stroke-width="0.7"/><rect x="6.5" y="1.7" width="3.4" height="3.4" fill="#fff" stroke="#000" stroke-width="1.1"/><rect x="17.9" y="1.7" width="3.4" height="3.4" fill="#fff" stroke="#000" stroke-width="1.1"/><rect x="2.2" y="12.9" width="3.4" height="3.4" fill="#fff" stroke="#000" stroke-width="1.1"/><rect x="13.2" y="18.2" width="3.4" height="3.4" fill="#fff" stroke="#000" stroke-width="1.1"/><path d="M25.6 21V25.6H21Z" fill="#7d7d7d"/></svg>
<svg class="a" style="left:32px;top:286px" width="27" height="27" viewBox="0 0 27 27" ><path d="M2 6.5L9.5 3L17 5.5C20.5 8 20.5 13 19.5 16.5L12.5 21V15C12.5 11 11 9.5 8.5 9.5Z" fill="url(#gb)" stroke="#101830" stroke-width="0.9"/><path d="M2 6.5L9.5 3L13 4.3L6 8.2Z" fill="#fff" stroke="#101830" stroke-width="0.8"/><path d="M12.5 16.5V21L19.5 16.5L19.9 13Z" fill="#fff" stroke="#101830" stroke-width="0.8"/><path d="M25.6 21V25.6H21Z" fill="#7d7d7d"/></svg>
<svg class="a" style="left:4px;top:314px" width="27" height="27" viewBox="0 0 27 27" ><path d="M3.2 6.4L11.4 2.4L19.6 5.6V16L11.4 20.3L3.2 16.6Z" fill="#5b7bea" stroke="#2438a0" stroke-width="0.8"/><path d="M3.2 6.4L11.4 2.4L19.6 5.6L11.4 9.6Z" fill="#8fa6ff"/><path d="M11.4 9.6L19.6 5.6V16L11.4 20.3Z" fill="#3b55c8"/><path d="M3.2 6.4L11.4 9.6L19.6 5.6M11.4 9.6V20.3" stroke="#c8d4ff" stroke-width="0.6" fill="none"/><path d="M25.6 21V25.6H21Z" fill="#7d7d7d"/></svg>
<svg class="a" style="left:32px;top:314px" width="27" height="27" viewBox="0 0 27 27" ><circle cx="16" cy="7.6" r="6.3" fill="url(#gs)" stroke="#0a1440" stroke-width="0.8"/><circle cx="8.2" cy="15.3" r="6.6" fill="url(#gs)" stroke="#0a1440" stroke-width="0.8"/><path d="M11 4C14 7 18 9 22 8.5M15 1.5C14 6 15 11 18 13.5M2.5 12.5C6 14 10 14.5 14.5 13M7 9C6 13 7 18 10 21.5" fill="none" stroke="#0a1440" stroke-width="0.5"/><path d="M25.6 21V25.6H21Z" fill="#7d7d7d"/></svg>
<svg class="a" style="left:4px;top:342px" width="27" height="27" viewBox="0 0 27 27" ><ellipse cx="11.8" cy="3.8" rx="5.6" ry="2.1" fill="none" stroke="#333" stroke-width="0.9"/><path d="M1.2 9.5C8 12.5 16 12.5 23 9.5V18.5C16 22 8 22 1.2 18.5Z" fill="#5b7bea" stroke="#101830" stroke-width="0.9"/><ellipse cx="11.8" cy="17" rx="5.8" ry="2.6" fill="#8fa6ff" stroke="#fff" stroke-width="1.3"/><path d="M25.6 21V25.6H21Z" fill="#7d7d7d"/></svg>
<svg class="a" style="left:32px;top:342px" width="27" height="27" viewBox="0 0 27 27" ><path d="M11 3C14 5 18 3.5 22.4 6.6C20 11 17 15 12.4 21C9 18.5 5 19 1.7 16.6C5 12 8 8 11 3Z" fill="url(#gb)" stroke="#101830" stroke-width="0.9"/><path d="M7.8 7.8C11 10 15 8.5 19 11.5M4.8 12.2C8 14.5 12 13 16 16M16 3.8C13 8 10 13 6.5 18.5" fill="none" stroke="#101830" stroke-width="0.6"/><path d="M25.6 21V25.6H21Z" fill="#7d7d7d"/></svg>
<svg class="a" style="left:4px;top:370px" width="27" height="27" viewBox="0 0 27 27" ><path d="M3 6.5C4 5 5.5 6 6.5 5.5C6 4 6.8 2.5 8.5 2.6C10 2.7 10.6 4 10 5.2L13 6.3L12 9C13 8.5 14.5 9 14.4 10.5C14.3 12 13 12.6 11.6 12L10.6 14.6L8 13.6C8.6 15 7.5 16 6.2 15.8C4.8 15.6 4.4 14.2 5 13L2.4 12L3.4 9.3C2 9.5 1.2 8.6 1.4 7.4C1.6 6.4 2.4 6.2 3 6.5Z" fill="#f5a000" stroke="#a05a00" stroke-width="0.6"/><path d="M11.5 12.5L14.2 11.4C13.7 10.2 14.5 9 16 9C17.4 9 18.2 10.2 17.7 11.5L20.5 12.6L19.5 15.2C20.7 14.7 22 15.4 22 16.8C22 18.2 20.7 18.9 19.4 18.3L18.4 21L15.6 20C16.2 21.3 15.4 22.4 14 22.4C12.6 22.4 11.9 21.2 12.5 20L9.8 19L10.8 16.3C9.6 16.7 8.6 16 8.7 14.8C8.8 13.6 10 13.2 11 13.7Z" fill="#fff" stroke="#999" stroke-width="0.6"/><path d="M25.6 21V25.6H21Z" fill="#7d7d7d"/></svg>
<svg class="a" style="left:32px;top:370px" width="27" height="27" viewBox="0 0 27 27" ><path d="M1 21L1.5 8L6.5 13.5L17 2L14 14L23 13L15 18L20 20.5L11 20Z" fill="url(#go)"/></svg>
<svg class="a" style="left:4px;top:398px" width="27" height="27" viewBox="0 0 27 27" ><path d="M11.5 2.5H18L13 16Z" fill="#14237a"/><rect x="1.5" y="11.2" width="11.5" height="5" fill="#fff" stroke="#000" stroke-width="1"/><rect x="-3" y="-2.2" width="8" height="4.4" fill="#fff" stroke="#000" stroke-width="1" transform="translate(17 18) rotate(45)"/><path d="M11.5 2.5H18L13 16Z" fill="#14237a"/></svg>
<svg class="a" style="left:32px;top:398px" width="27" height="27" viewBox="0 0 27 27" ><rect x="2.5" y="13.5" width="18.5" height="5" fill="#fff" stroke="#000" stroke-width="1"/><path d="M13 5H19.5L14.5 18.5H11.5Z" fill="#14237a"/></svg>
<svg class="a" style="left:4px;top:426px" width="27" height="27" viewBox="0 0 27 27" ><circle cx="11.8" cy="8.2" r="4.2" fill="#5b7bea" stroke="#000" stroke-width="1.8"/><circle cx="16" cy="14.3" r="4.2" fill="#14237a" stroke="#000" stroke-width="1.8"/><circle cx="8.2" cy="14.6" r="4.2" fill="#fff" stroke="#000" stroke-width="1.8"/><path d="M25.6 21V25.6H21Z" fill="#7d7d7d"/></svg>
<svg class="a" style="left:32px;top:426px" width="27" height="27" viewBox="0 0 27 27" ><circle cx="11.7" cy="7.5" r="3.4" fill="#5b7bea" stroke="#223" stroke-width="0.6"/><circle cx="6.7" cy="16" r="3.4" fill="#fff" stroke="#000" stroke-width="0.9"/><circle cx="17.4" cy="15.8" r="3.4" fill="#14237a" stroke="#000" stroke-width="0.6"/></svg>
<svg class="a" style="left:4px;top:454px" width="27" height="27" viewBox="0 0 27 27" ><path d="M1.7 6.7C11 6 18 12 16.8 22.4" fill="none" stroke="#000" stroke-width="1.3"/><rect x="5.2" y="5.2" width="3" height="3" fill="#fff" stroke="#000" stroke-width="1.1"/><rect x="15.6" y="15.5" width="3" height="3" fill="#fff" stroke="#000" stroke-width="1.1"/></svg>
<svg class="a" style="left:32px;top:454px" width="27" height="27" viewBox="0 0 27 27" ><path d="M1.7 3.2L9.1 2.8L21 14.8V22.5" fill="none" stroke="#000" stroke-width="1" stroke-dasharray="1.1 1.1"/><path d="M1.7 7.4C11 7 17.8 13 17.4 22.4" fill="none" stroke="#000" stroke-width="2"/><rect x="7.6" y="1.3" width="3" height="3" fill="#fff" stroke="#000" stroke-width="1.1"/><rect x="19.5" y="13.3" width="3" height="3" fill="#fff" stroke="#000" stroke-width="1.1"/><path d="M25.6 21V25.6H21Z" fill="#7d7d7d"/></svg>
<svg class="a" style="left:4px;top:482px" width="27" height="27" viewBox="0 0 27 27" ><path d="M3.2 3.5L5 1.8H18L19.6 3.5V8L17 6.5H14V19L16.5 21.5L15 23H8.5L7 21.5L9.3 19V6.5H6L3.2 8Z" fill="url(#gb)" stroke="#14237a" stroke-width="0.9"/></svg>
<svg class="a" style="left:32px;top:482px" width="27" height="27" viewBox="0 0 27 27" ><path d="M8.5 15.5L16 8" stroke="#000" stroke-width="1"/><path d="M12.5 8H16.3V11.8" fill="none" stroke="#000" stroke-width="1"/><rect x="3.2" y="14.5" width="6.4" height="6.4" fill="#f4f4f4" stroke="#000" stroke-width="1"/><rect x="15.4" y="2.3" width="6.4" height="6.4" fill="#7f98f5" stroke="#14237a" stroke-width="1"/><path d="M25.6 21V25.6H21Z" fill="#7d7d7d"/></svg>
<svg class="a" style="left:4px;top:510px" width="27" height="27" viewBox="0 0 27 27" ><rect x="3.7" y="2.8" width="5.6" height="5.6" fill="#7f98f5" stroke="#000" stroke-width="1"/><rect x="15.4" y="4.9" width="5.6" height="5.6" fill="#7f98f5" stroke="#000" stroke-width="1"/><rect x="11.5" y="8.3" width="5.6" height="5.6" fill="#7f98f5" stroke="#000" stroke-width="1"/><rect x="3.7" y="14.8" width="5.6" height="5.6" fill="#f4f4f4" stroke="#000" stroke-width="1"/><rect x="15.8" y="16.2" width="5.6" height="5.6" fill="#7f98f5" stroke="#000" stroke-width="1"/></svg>
<svg class="a" style="left:32px;top:510px" width="27" height="27" viewBox="0 0 27 27" ><rect x="1.7" y="2.5" width="4.7" height="13.4" fill="#f0f0f0" stroke="#000" stroke-width="1"/><rect x="-6.8" y="-2.5" width="13.6" height="5" fill="#7f98f5" stroke="#000" stroke-width="1" transform="translate(16 12.8) rotate(-40)"/><path d="M6.5 4C10 2.5 14 4 15.5 7" fill="none" stroke="#000" stroke-width="1"/><path d="M12.8 6.8H15.8V3.8" fill="none" stroke="#000" stroke-width="1"/></svg>
<svg class="a" style="left:4px;top:538px" width="27" height="27" viewBox="0 0 27 27" ><path d="M3.2 7L11.8 2.2L20.4 6V16.5L11.8 22.3L3.2 17.8Z" fill="#5b7bea" stroke="#14237a" stroke-width="0.9"/><path d="M3.2 7L11.8 2.2L20.4 6L11.8 10.5Z" fill="#a4b6ff"/><path d="M11.8 10.5L20.4 6V16.5L11.8 22.3Z" fill="#3550c8"/><path d="M9 15.5L14 13V18L16.5 19.5L11.8 22.3L9 20.8Z" fill="#fff" stroke="#555" stroke-width="0.6"/><path d="M25.6 21V25.6H21Z" fill="#7d7d7d"/></svg>
<svg class="a" style="left:32px;top:538px" width="27" height="27" viewBox="0 0 27 27" ><path d="M1.7 20.8L6 16H21.5L17.5 20.8Z" fill="#6f8af0" stroke="#14237a" stroke-width="0.9"/><path d="M6.4 18V6" stroke="#9a9090" stroke-width="1.6"/><path d="M4.0 7.2L6.4 3.6L8.8 7.2Z" fill="#9a9090"/><path d="M12.1 18V6" stroke="#9a9090" stroke-width="1.6"/><path d="M9.7 7.2L12.1 3.6L14.5 7.2Z" fill="#9a9090"/><path d="M17.8 18V6" stroke="#9a9090" stroke-width="1.6"/><path d="M15.4 7.2L17.8 3.6L20.2 7.2Z" fill="#9a9090"/><path d="M25.6 21V25.6H21Z" fill="#7d7d7d"/></svg>
<svg class="a" style="left:4px;top:566px" width="27" height="27" viewBox="0 0 27 27" ><rect x="2.5" y="2.5" width="4.2" height="4.2" fill="#7f98f5" stroke="#000" stroke-width="1"/><rect x="2.5" y="8.9" width="4.2" height="4.2" fill="#7f98f5" stroke="#000" stroke-width="1"/><rect x="2.5" y="16.1" width="4.2" height="4.2" fill="#fff" stroke="#000" stroke-width="1"/><rect x="9.4" y="2.5" width="4.2" height="4.2" fill="#7f98f5" stroke="#000" stroke-width="1"/><rect x="9.4" y="8.9" width="4.2" height="4.2" fill="#7f98f5" stroke="#000" stroke-width="1"/><rect x="9.4" y="16.1" width="4.2" height="4.2" fill="#7f98f5" stroke="#000" stroke-width="1"/><rect x="16.3" y="2.5" width="4.2" height="4.2" fill="#7f98f5" stroke="#000" stroke-width="1"/><rect x="16.3" y="8.9" width="4.2" height="4.2" fill="#7f98f5" stroke="#000" stroke-width="1"/><rect x="16.3" y="16.1" width="4.2" height="4.2" fill="#7f98f5" stroke="#000" stroke-width="1"/><path d="M25.6 21V25.6H21Z" fill="#7d7d7d"/></svg>
<svg class="a" style="left:32px;top:566px" width="27" height="27" viewBox="0 0 27 27" ><rect x="7.4" y="2.4" width="9.3" height="4.8" fill="#fff" stroke="#000" stroke-width="1"/><rect x="9.5" y="8.9" width="4.6" height="4.3" fill="#fff" stroke="#000" stroke-width="1"/><rect x="8.1" y="15.3" width="7.9" height="6.5" fill="#fff" stroke="#000" stroke-width="1"/><path d="M12 1V23" stroke="#e00000" stroke-width="1.3"/><path d="M25.6 21V25.6H21Z" fill="#7d7d7d"/></svg>
<svg class="a" style="left:4px;top:594px" width="27" height="27" viewBox="0 0 27 27" ><path d="M3 8L8 4.5L12 5.5V18L8 21L3 19Z" fill="#f4f4f4" stroke="#555" stroke-width="0.8"/><path d="M9 19L13 6L16 3.5L21 7L16.5 20.5L12.5 23Z" fill="url(#gb)" stroke="#14237a" stroke-width="0.8"/><path d="M13 6L18 9.5L13.5 22" fill="none" stroke="#c8d4ff" stroke-width="0.6"/><path d="M25.6 21V25.6H21Z" fill="#7d7d7d"/></svg>
<svg class="a" style="left:32px;top:594px" width="27" height="27" viewBox="0 0 27 27" ><rect x="8" y="1.5" width="3" height="21" fill="#6f8af0" stroke="#14237a" stroke-width="0.8"/><circle cx="2.6" cy="7.5" r="1.8" fill="#111"/><circle cx="16.4" cy="7.5" r="1.8" fill="#111"/><path d="M3 10L7.5 11.5L6 15.5L8 17M11.5 11.5L16 10L19 12.5L20 17L23.5 21" fill="none" stroke="#111" stroke-width="1.7"/><path d="M21 22.5H24V19.5Z" fill="#111"/><path d="M25.6 21V25.6H21Z" fill="#7d7d7d"/></svg>
<svg class="a" style="left:4px;top:622px" width="27" height="27" viewBox="0 0 27 27" ><path d="M2.6 12.8L5.2 10.8L8.4 15.6C11.5 9.5 15.8 5 21.8 1.8L22.4 2.6C17 7.5 13 13 9.4 21.4H7.8C6.4 18 4.6 15 2.6 12.8Z" fill="#000"/><path d="M25.6 21V25.6H21Z" fill="#7d7d7d"/></svg>
<svg class="a" style="left:32px;top:622px" width="27" height="27" viewBox="0 0 27 27" ><path d="M2.4 6.5L8.5 3.5L14 5.5V14L8 17.5L2.4 15Z" fill="#c4c4c4" stroke="#2a2a2a" stroke-width="0.9"/><path d="M2.4 6.5L8 8.6L14 5.5M8 8.6V17.5" fill="none" stroke="#666" stroke-width="0.6"/><path d="M2.4 6.5L8.5 3.5L14 5.5L8 8.6Z" fill="#f4f4f4"/><path d="M16 4.5L11.5 18C13 21 20.5 21 22 17.5Z" fill="#b4b4b4" stroke="#2a2a2a" stroke-width="0.9"/><path d="M16 4.5L14.5 20" stroke="#eee" stroke-width="1"/><path d="M25.6 21V25.6H21Z" fill="#7d7d7d"/></svg>
<svg class="a" style="left:4px;top:650px" width="27" height="27" viewBox="0 0 27 27" ><path d="M3.4 16L11.8 7L19.8 15.5L11.8 20.5Z" fill="#e8c040" stroke="#7a5a00" stroke-width="0.8"/><path d="M11.8 7V20.5L19.8 15.5Z" fill="#c89820"/><path d="M9.5 4.5L14 0.8H20.5V0H23V6H20.5V5H16.5L12.5 7.2Z" fill="#fff" stroke="#333" stroke-width="0.7"/><rect x="20.6" y="0" width="2.4" height="6" fill="#000"/><path d="M10.5 4L14.5 1.6M11.5 5L15.5 2.6M12.5 6L16.5 3.6" stroke="#555" stroke-width="0.5"/><path d="M25.6 21V25.6H21Z" fill="#7d7d7d"/></svg>
<svg class="a" style="left:1724px;top:157px" width="28" height="28" viewBox="0 0 28 28" ><defs><radialGradient id="lens" cx="0.45" cy="0.4" r="0.6"><stop offset="0" stop-color="#5a6aa0"/><stop offset="0.5" stop-color="#1a2038"/><stop offset="1" stop-color="#000"/></radialGradient></defs><path d="M3 11.5C3 9.5 4.5 9 6 9H8.5L10 6.2H18.5L20 9H22.5C24 9 25 10 25 11.5V21.5C25 23 24 23.6 22.5 23.6H5.5C4 23.6 3 23 3 21.5Z" fill="#262626" stroke="#000" stroke-width="0.6"/><rect x="11" y="5" width="6.5" height="2.2" rx="0.8" fill="#333"/><rect x="4.5" y="7.8" width="3" height="1.6" fill="#333"/><circle cx="14.3" cy="16" r="6.6" fill="#3a3a3a" stroke="#8a8a8a" stroke-width="0.9"/><circle cx="14.3" cy="16" r="4.6" fill="url(#lens)" stroke="#666" stroke-width="0.6"/><path d="M11.5 14.5A3.4 3.4 0 0 1 14 12.7" stroke="#8fb0e8" stroke-width="0.9" fill="none"/><path d="M16.8 17.5A3 3 0 0 1 15 19" stroke="#5a9a5a" stroke-width="0.8" fill="none"/></svg>
<svg class="a" style="left:1757px;top:159px" width="26" height="24" viewBox="0 0 26 24" ><rect x="1" y="1.5" width="23.5" height="21.5" fill="#d2d2d2" stroke="#6a6a6a" stroke-width="1"/><rect x="3.2" y="3.7" width="19" height="17" fill="#fff" stroke="#1fb0f0" stroke-width="1.4"/><rect x="5.3" y="5.8" width="14.8" height="12.8" fill="#fff" stroke="#e00000" stroke-width="1.4"/></svg>
<svg class="a" style="left:1790px;top:158px" width="24" height="26" viewBox="0 0 24 26" ><circle cx="8.5" cy="18.5" r="5.8" fill="url(#gs)" stroke="#0a1440" stroke-width="0.5"/><circle cx="15" cy="10.8" r="4.3" fill="url(#gs)" stroke="#0a1440" stroke-width="0.5"/><circle cx="19.6" cy="5" r="2.9" fill="url(#gs)" stroke="#0a1440" stroke-width="0.4"/><ellipse cx="6.5" cy="16" rx="2.2" ry="1.6" fill="#fff" opacity="0.75"/><ellipse cx="13.6" cy="9" rx="1.6" ry="1.2" fill="#fff" opacity="0.75"/><ellipse cx="18.8" cy="4" rx="1" ry="0.8" fill="#fff" opacity="0.8"/></svg>
<svg class="a" style="left:1900px;top:163px" width="17" height="16" viewBox="0 0 17 16" ><path d="M1.8 3.4L4.7 1.9L14.1 4.9L5.2 9.1Z" fill="#f06a1e" stroke="#a03000" stroke-width="0.5"/><path d="M5.2 9.1L14.1 4.9V10L6 14.6Z" fill="#fff" stroke="#334" stroke-width="0.5"/><path d="M5.5 11L14.1 6.8V8.4L5.75 12.6Z" fill="#d83030"/><path d="M5.8 13L14.1 8.8V10L6 14.6Z" fill="#2040c0"/><path d="M1.8 3.4L5.2 9.1L6 14.6L2.6 8.4Z" fill="#1a2f9a" stroke="#112" stroke-width="0.5"/></svg>
<div class="a" style="left:1901.2px;top:200.2px;width:13px;height:13px;border-radius:50%;background:conic-gradient(from 0deg,#ff0000,#ffff00,#00ff00,#00ffff,#0000ff,#ff00ff,#ff0000);box-shadow:0 0 0 0.8px #111;"></div>
<div class="a" style="left:1904.6px;top:203.6px;width:6.2px;height:6.2px;border-radius:50%;background:#fff;box-shadow:0 0 0 0.7px #222;"></div>
<svg class="a" style="left:1899px;top:234px" width="18" height="18" viewBox="0 0 18 18" ><defs><linearGradient id="mon" x1="0" y1="0" x2="0" y2="1"><stop offset="0" stop-color="#e6e6e6"/><stop offset="1" stop-color="#8e8e8e"/></linearGradient></defs><rect x="2.3" y="2.4" width="13" height="10.8" fill="url(#mon)" stroke="#111" stroke-width="1.6"/><path d="M6.2 13.8H11.4V15.2H13V16H4.6V15.2H6.2Z" fill="#111"/></svg>
<svg class="a" style="left:1899px;top:270px" width="18" height="18" viewBox="0 0 18 18" ><rect x="1.6" y="1.8" width="14.6" height="14.6" fill="#9a9aa2" stroke="#5a5a62" stroke-width="0.8"/><rect x="2.2" y="2.2" width="13.4" height="2" fill="#1a2a7a"/><rect x="3" y="5" width="11.8" height="9.6" rx="3.5" fill="#3a55d0"/><text x="8.9" y="13.6" font-family="Liberation Serif,serif" font-size="11" font-weight="700" fill="#fff" text-anchor="middle">?</text></svg>
<span class="t" style="left:6.9px;top:4.00px;font-size:12px;font-weight:400;color:#1b1b1b;transform:scaleX(0.9564);">File</span>
<span class="t" style="left:38.4px;top:4.00px;font-size:12px;font-weight:400;color:#1b1b1b;transform:scaleX(1.0151);">Edit</span>
<span class="t" style="left:72.4px;top:4.00px;font-size:12px;font-weight:400;color:#1b1b1b;transform:scaleX(1.0079);">View</span>
<span class="t" style="left:111.9px;top:4.00px;font-size:12px;font-weight:400;color:#1b1b1b;transform:scaleX(0.9995);">Curve</span>
<span class="t" style="left:156.9px;top:4.00px;font-size:12px;font-weight:400;color:#1b1b1b;transform:scaleX(0.9671);">Surface</span>
<span class="t" style="left:210.4px;top:4.00px;font-size:12px;font-weight:400;color:#1b1b1b;transform:scaleX(0.9324);">SubD</span>
<span class="t" style="left:251.9px;top:4.00px;font-size:12px;font-weight:400;color:#1b1b1b;transform:scaleX(0.9930);">Solid</span>
<span class="t" style="left:292.4px;top:4.00px;font-size:12px;font-weight:400;color:#1b1b1b;transform:scaleX(0.9883);">Mesh</span>
<span class="t" style="left:335.4px;top:4.00px;font-size:12px;font-weight:400;color:#1b1b1b;transform:scaleX(1.0230);">Drafting</span>
<span class="t" style="left:392.4px;top:4.00px;font-size:12px;font-weight:400;color:#1b1b1b;transform:scaleX(0.9957);">Transform</span>
<span class="t" style="left:459.9px;top:4.00px;font-size:12px;font-weight:400;color:#1b1b1b;transform:scaleX(1.0173);">Tools</span>
<span class="t" style="left:501.9px;top:4.00px;font-size:12px;font-weight:400;color:#1b1b1b;transform:scaleX(0.9718);">Analyze</span>
<span class="t" style="left:556.9px;top:4.00px;font-size:12px;font-weight:400;color:#1b1b1b;transform:scaleX(0.9528);">Render</span>
<span class="t" style="left:608.4px;top:4.00px;font-size:12px;font-weight:400;color:#1b1b1b;transform:scaleX(1.0425);">Window</span>
<span class="t" style="left:666.4px;top:4.00px;font-size:12px;font-weight:400;color:#1b1b1b;transform:scaleX(1.0127);">Help</span>
<span class="t" style="left:21.9px;top:84.00px;font-size:12px;font-weight:400;color:#6c6c6c;transform:scaleX(0.9856);">Standard</span>
<span class="t" style="left:89.4px;top:84.00px;font-size:12px;font-weight:400;color:#232323;transform:scaleX(0.9259);">CPlanes</span>
<span class="t" style="left:150.9px;top:84.00px;font-size:12px;font-weight:400;color:#6c6c6c;transform:scaleX(0.9864);">Set View</span>
<span class="t" style="left:216.4px;top:84.00px;font-size:12px;font-weight:400;color:#6c6c6c;transform:scaleX(0.9909);">Display</span>
<span class="t" style="left:273.9px;top:84.00px;font-size:12px;font-weight:400;color:#6c6c6c;transform:scaleX(0.9742);">Select</span>
<span class="t" style="left:325.9px;top:84.00px;font-size:12px;font-weight:400;color:#6c6c6c;transform:scaleX(1.0193);">Viewport Layout</span>
<span class="t" style="left:432.1px;top:84.00px;font-size:12px;font-weight:400;color:#6c6c6c;transform:scaleX(1.0412);">Visibility</span>
<span class="t" style="left:496.4px;top:84.00px;font-size:12px;font-weight:400;color:#6c6c6c;transform:scaleX(0.9740);">Curve Tools</span>
<span class="t" style="left:577.4px;top:84.00px;font-size:12px;font-weight:400;color:#6c6c6c;transform:scaleX(0.9655);">Surface Tools</span>
<span class="t" style="left:666.9px;top:84.00px;font-size:12px;font-weight:400;color:#6c6c6c;transform:scaleX(0.9778);">SubD Tools</span>
<span class="t" style="left:746.4px;top:84.00px;font-size:12px;font-weight:400;color:#6c6c6c;transform:scaleX(0.9920);">Mesh Tools</span>
<span class="t" style="left:825.4px;top:84.00px;font-size:12px;font-weight:400;color:#6c6c6c;transform:scaleX(0.9787);">Render Tools</span>
<span class="t" style="left:913.4px;top:84.00px;font-size:12px;font-weight:400;color:#6c6c6c;transform:scaleX(1.0468);">Drafting</span>
<span class="t" style="left:976.9px;top:84.00px;font-size:12px;font-weight:400;color:#6c6c6c;transform:scaleX(1.0054);">New in V8</span>
<span class="t" style="left:75.9px;top:139.00px;font-size:12px;font-weight:700;color:#20242e;transform:scaleX(0.9779);">Perspective</span>
<span class="t" style="left:77.8px;top:920.00px;font-size:12px;font-weight:400;color:#222;transform:scaleX(0.9633);">Perspective</span>
<span class="t" style="left:152.8px;top:920.00px;font-size:12px;font-weight:400;color:#6c6c6c;transform:scaleX(1.0538);">Top</span>
<span class="t" style="left:187.4px;top:920.00px;font-size:12px;font-weight:400;color:#6c6c6c;transform:scaleX(1.0351);">Front</span>
<span class="t" style="left:230.8px;top:920.00px;font-size:12px;font-weight:400;color:#6c6c6c;transform:scaleX(1.0209);">Right</span>
<span class="t" style="left:31.0px;top:942.00px;font-size:12px;font-weight:400;color:#222;transform:scaleX(0.9729);">Osnap</span>
<span class="t" style="left:85.1px;top:942.00px;font-size:12px;font-weight:400;color:#6c6c6c;transform:scaleX(0.9757);">Selection Filters</span>
<span class="t" style="left:43.1px;top:962.00px;font-size:12px;font-weight:400;color:#1b1b1b;transform:scaleX(0.9457);">End</span>
<span class="t" style="left:91.4px;top:962.00px;font-size:12px;font-weight:400;color:#1b1b1b;transform:scaleX(0.9725);">Near</span>
<span class="t" style="left:143.9px;top:962.00px;font-size:12px;font-weight:400;color:#1b1b1b;transform:scaleX(1.0490);">Point</span>
<span class="t" style="left:200.3px;top:962.00px;font-size:12px;font-weight:400;color:#1b1b1b;transform:scaleX(1.0856);">Mid</span>
<span class="t" style="left:249.4px;top:962.00px;font-size:12px;font-weight:400;color:#1b1b1b;transform:scaleX(0.9584);">Cen</span>
<span class="t" style="left:298.2px;top:962.00px;font-size:12px;font-weight:400;color:#1b1b1b;transform:scaleX(1.0941);">Int</span>
<span class="t" style="left:340.2px;top:962.00px;font-size:12px;font-weight:400;color:#1b1b1b;transform:scaleX(0.9503);">Perp</span>
<span class="t" style="left:392.6px;top:962.00px;font-size:12px;font-weight:400;color:#1b1b1b;transform:scaleX(0.9814);">Tan</span>
<span class="t" style="left:438.9px;top:962.00px;font-size:12px;font-weight:400;color:#1b1b1b;transform:scaleX(1.0082);">Quad</span>
<span class="t" style="left:496.4px;top:962.00px;font-size:12px;font-weight:400;color:#1b1b1b;transform:scaleX(1.0329);">Knot</span>
<span class="t" style="left:548.9px;top:962.00px;font-size:12px;font-weight:400;color:#1b1b1b;transform:scaleX(0.9403);">Vertex</span>
<span class="t" style="left:607.9px;top:962.00px;font-size:12px;font-weight:400;color:#1b1b1b;transform:scaleX(1.0091);">Project</span>
<span class="t" style="left:680.9px;top:962.00px;font-size:12px;font-weight:400;color:#1b1b1b;transform:scaleX(0.9742);">Disable</span>
<span class="t" style="left:41.8px;top:993.00px;font-size:12px;font-weight:400;color:#333;transform:scaleX(0.9324);">CPlane</span>
<span class="t" style="left:121.8px;top:993.00px;font-size:12px;font-weight:400;color:#333;transform:scaleX(0.9651);">x 5.798</span>
<span class="t" style="left:200.2px;top:993.00px;font-size:12px;font-weight:400;color:#333;transform:scaleX(0.9674);">y 257.868</span>
<span class="t" style="left:303.7px;top:993.00px;font-size:12px;font-weight:400;color:#333;transform:scaleX(0.9678);">z 0</span>
<span class="t" style="left:392.2px;top:993.00px;font-size:12px;font-weight:400;color:#333;transform:scaleX(0.9577);">Feet</span>
<span class="t" style="left:480.2px;top:993.00px;font-size:12px;font-weight:400;color:#333;transform:scaleX(1.0123);">Default</span>
<span class="t" style="left:655.9px;top:993.00px;font-size:12px;font-weight:400;color:#333;transform:scaleX(0.9680);">Grid Snap</span>
<span class="t" style="left:727.2px;top:993.00px;font-size:12px;font-weight:700;color:#222;transform:scaleX(1.0407);">Ortho</span>
<span class="t" style="left:779.2px;top:993.00px;font-size:12px;font-weight:700;color:#222;transform:scaleX(0.9813);">Planar</span>
<span class="t" style="left:832.5px;top:993.00px;font-size:12px;font-weight:700;color:#222;transform:scaleX(0.9560);">Osnap</span>
<span class="t" style="left:889.2px;top:993.00px;font-size:12px;font-weight:400;color:#333;transform:scaleX(0.9584);">SmartTrack</span>
<span class="t" style="left:971.7px;top:993.00px;font-size:12px;font-weight:400;color:#333;transform:scaleX(0.9667);">Gumball (CPlane)</span>
<span class="t" style="left:1103.0px;top:993.00px;font-size:12px;font-weight:400;color:#333;transform:scaleX(0.9807);">Auto CPlane (Object)</span>
<span class="t" style="left:1238.7px;top:993.00px;font-size:12px;font-weight:400;color:#333;transform:scaleX(0.9854);">Record History</span>
<span class="t" style="left:1338.9px;top:993.00px;font-size:12px;font-weight:400;color:#333;transform:scaleX(1.0236);">Filter</span>
<span class="t" style="left:1387.2px;top:993.00px;font-size:12px;font-weight:400;color:#333;transform:scaleX(0.9370);">CPU use: 2.2 %</span>
<span class="t" style="left:1722.1px;top:137.00px;font-size:12px;font-weight:400;color:#6c6c6c;transform:scaleX(1.0024);">Properties: Viewport</span>
<span class="t" style="left:1722.0px;top:202.80px;font-size:13.4px;font-weight:400;color:#222;transform:scaleX(1.0548);">Viewport</span>
<span class="t" style="left:1722.0px;top:351.80px;font-size:13.4px;font-weight:400;color:#222;transform:scaleX(0.9949);">Camera</span>
<span class="t" style="left:1722.0px;top:520.80px;font-size:13.4px;font-weight:400;color:#222;transform:scaleX(0.9914);">Target</span>
<span class="t" style="left:1722.0px;top:629.80px;font-size:13.4px;font-weight:400;color:#222;transform:scaleX(1.0101);">Wallpaper</span>
<span class="t" style="left:1738.0px;top:226.00px;font-size:12px;font-weight:400;color:#222;transform:scaleX(1.0524);">Title</span>
<span class="t" style="left:1738.0px;top:247.00px;font-size:12px;font-weight:400;color:#222;transform:scaleX(1.0395);">Width</span>
<span class="t" style="left:1738.0px;top:267.00px;font-size:12px;font-weight:400;color:#222;transform:scaleX(1.0494);">Height</span>
<span class="t" style="left:1738.0px;top:288.00px;font-size:12px;font-weight:400;color:#222;transform:scaleX(1.0098);">Projection</span>
<span class="t" style="left:1738.0px;top:310.00px;font-size:12px;font-weight:400;color:#222;transform:scaleX(0.9958);">Display mode</span>
<span class="t" style="left:1738.0px;top:331.00px;font-size:12px;font-weight:400;color:#222;transform:scaleX(0.9792);">Locked</span>
<span class="t" style="left:1738.0px;top:394.00px;font-size:12px;font-weight:400;color:#222;transform:scaleX(1.0044);">Rotation</span>
<span class="t" style="left:1738.0px;top:414.00px;font-size:12px;font-weight:400;color:#222;transform:scaleX(0.9856);">X Location</span>
<span class="t" style="left:1738.0px;top:434.00px;font-size:12px;font-weight:400;color:#222;transform:scaleX(0.9894);">Y Location</span>
<span class="t" style="left:1738.0px;top:454.00px;font-size:12px;font-weight:400;color:#222;transform:scaleX(0.9974);">Z Location</span>
<span class="t" style="left:1738.0px;top:497.00px;font-size:12px;font-weight:400;color:#222;transform:scaleX(1.0116);">Location</span>
<span class="t" style="left:1738.0px;top:543.00px;font-size:12px;font-weight:400;color:#222;transform:scaleX(0.9756);">X Target</span>
<span class="t" style="left:1738.0px;top:563.00px;font-size:12px;font-weight:400;color:#222;transform:scaleX(0.9804);">Y Target</span>
<span class="t" style="left:1738.0px;top:583.00px;font-size:12px;font-weight:400;color:#222;transform:scaleX(0.9906);">Z Target</span>
<span class="t" style="left:1738.0px;top:606.00px;font-size:12px;font-weight:400;color:#222;transform:scaleX(1.0116);">Location</span>
<span class="t" style="left:1738.0px;top:655.00px;font-size:12px;font-weight:400;color:#222;transform:scaleX(0.9806);">Filename</span>
<span class="t" style="left:1738.0px;top:678.00px;font-size:12px;font-weight:400;color:#222;transform:scaleX(0.9790);">Show</span>
<span class="t" style="left:1738.0px;top:698.00px;font-size:12px;font-weight:400;color:#222;transform:scaleX(0.9379);">Gray</span>
<div class="a" style="left:0;top:0;width:1811.6px;height:1005px;overflow:hidden;pointer-events:none"><span class="t" style="left:1738.0px;top:374.00px;font-size:12px;font-weight:400;color:#222;transform:scaleX(0.9756);">Lens Length (mm)</span></div>
<div class="a" style="left:0;top:0;width:1811.6px;height:1005px;overflow:hidden;pointer-events:none"><span class="t" style="left:1738.0px;top:474.00px;font-size:12px;font-weight:400;color:#222;transform:scaleX(0.9706);">Distance to Target</span></div>
<span class="t" style="left:1820.4px;top:226.00px;font-size:12px;font-weight:400;color:#222;transform:scaleX(0.9728);">Perspective</span>
<span class="t" style="left:1820.4px;top:247.00px;font-size:12px;font-weight:400;color:#222;transform:scaleX(0.9175);">1645</span>
<span class="t" style="left:1820.4px;top:267.00px;font-size:12px;font-weight:400;color:#222;transform:scaleX(0.9485);">778</span>
<span class="t" style="left:1820.4px;top:374.00px;font-size:12px;font-weight:400;color:#222;transform:scaleX(0.9418);">50.0</span>
<span class="t" style="left:1820.4px;top:394.00px;font-size:12px;font-weight:400;color:#222;transform:scaleX(0.9588);">0.0</span>
<span class="t" style="left:1820.4px;top:414.00px;font-size:12px;font-weight:400;color:#222;transform:scaleX(0.9264);">15.498</span>
<span class="t" style="left:1820.4px;top:434.00px;font-size:12px;font-weight:400;color:#222;transform:scaleX(0.9219);">247.529</span>
<span class="t" style="left:1820.4px;top:454.00px;font-size:12px;font-weight:400;color:#222;transform:scaleX(0.9324);">7.295</span>
<span class="t" style="left:1820.4px;top:474.00px;font-size:12px;font-weight:400;color:#222;transform:scaleX(0.9264);">12.109</span>
<span class="t" style="left:1820.4px;top:543.00px;font-size:12px;font-weight:400;color:#222;transform:scaleX(0.9324);">7.955</span>
<span class="t" style="left:1820.4px;top:563.00px;font-size:12px;font-weight:400;color:#222;transform:scaleX(0.9219);">254.993</span>
<span class="t" style="left:1820.4px;top:583.00px;font-size:12px;font-weight:400;color:#222;transform:scaleX(0.9324);">1.461</span>
<div class="a" style="left:0;top:0;width:1875px;height:1005px;overflow:hidden;pointer-events:none"><span class="t" style="left:1820.4px;top:288.00px;font-size:12px;font-weight:400;color:#222;transform:scaleX(0.9637);">Perspective</span></div>
<div class="a" style="left:0;top:0;width:1875px;height:1005px;overflow:hidden;pointer-events:none"><span class="t" style="left:1820.4px;top:310.00px;font-size:12px;font-weight:400;color:#222;transform:scaleX(0.9985);">Wireframe</span></div>
<span class="t" style="left:1833.9px;top:497.00px;font-size:12px;font-weight:400;color:#222;transform:scaleX(0.9268);">Place...</span>
<span class="t" style="left:1833.9px;top:606.00px;font-size:12px;font-weight:400;color:#222;transform:scaleX(0.9268);">Place...</span>
<span class="t" style="left:1819.4px;top:655.00px;font-size:12px;font-weight:400;color:#6c6c6c;transform:scaleX(1.0955);">(none)</span>
<span class="t" style="left:1873.4px;top:655.00px;font-size:12px;font-weight:400;color:#222;transform:scaleX(0.8986);">...</span>
<span class="t" style="left:13.1px;top:14.00px;font-size:12px;font-weight:400;color:#000;transform:scaleX(0.9720);clip-path:inset(8px 0 0 0);">Autosave succeeded</span>
<span class="t" style="left:13.1px;top:29.00px;font-size:12px;font-weight:400;color:#000;transform:scaleX(0.9852);">Command: Shade</span>
<span class="t" style="left:13.1px;top:44.00px;font-size:12px;font-weight:400;color:#000;transform:scaleX(0.9652);">Choose Shade settings ( DisplayMode=Shaded  DrawCurves=Yes  DrawWires=No  DrawGrid=Yes  DrawAxes=Yes )</span>
<span class="t" style="left:13.1px;top:60.00px;font-size:12px;font-weight:700;color:#000;transform:scaleX(0.9494);">Command:</span>
</body></html>
